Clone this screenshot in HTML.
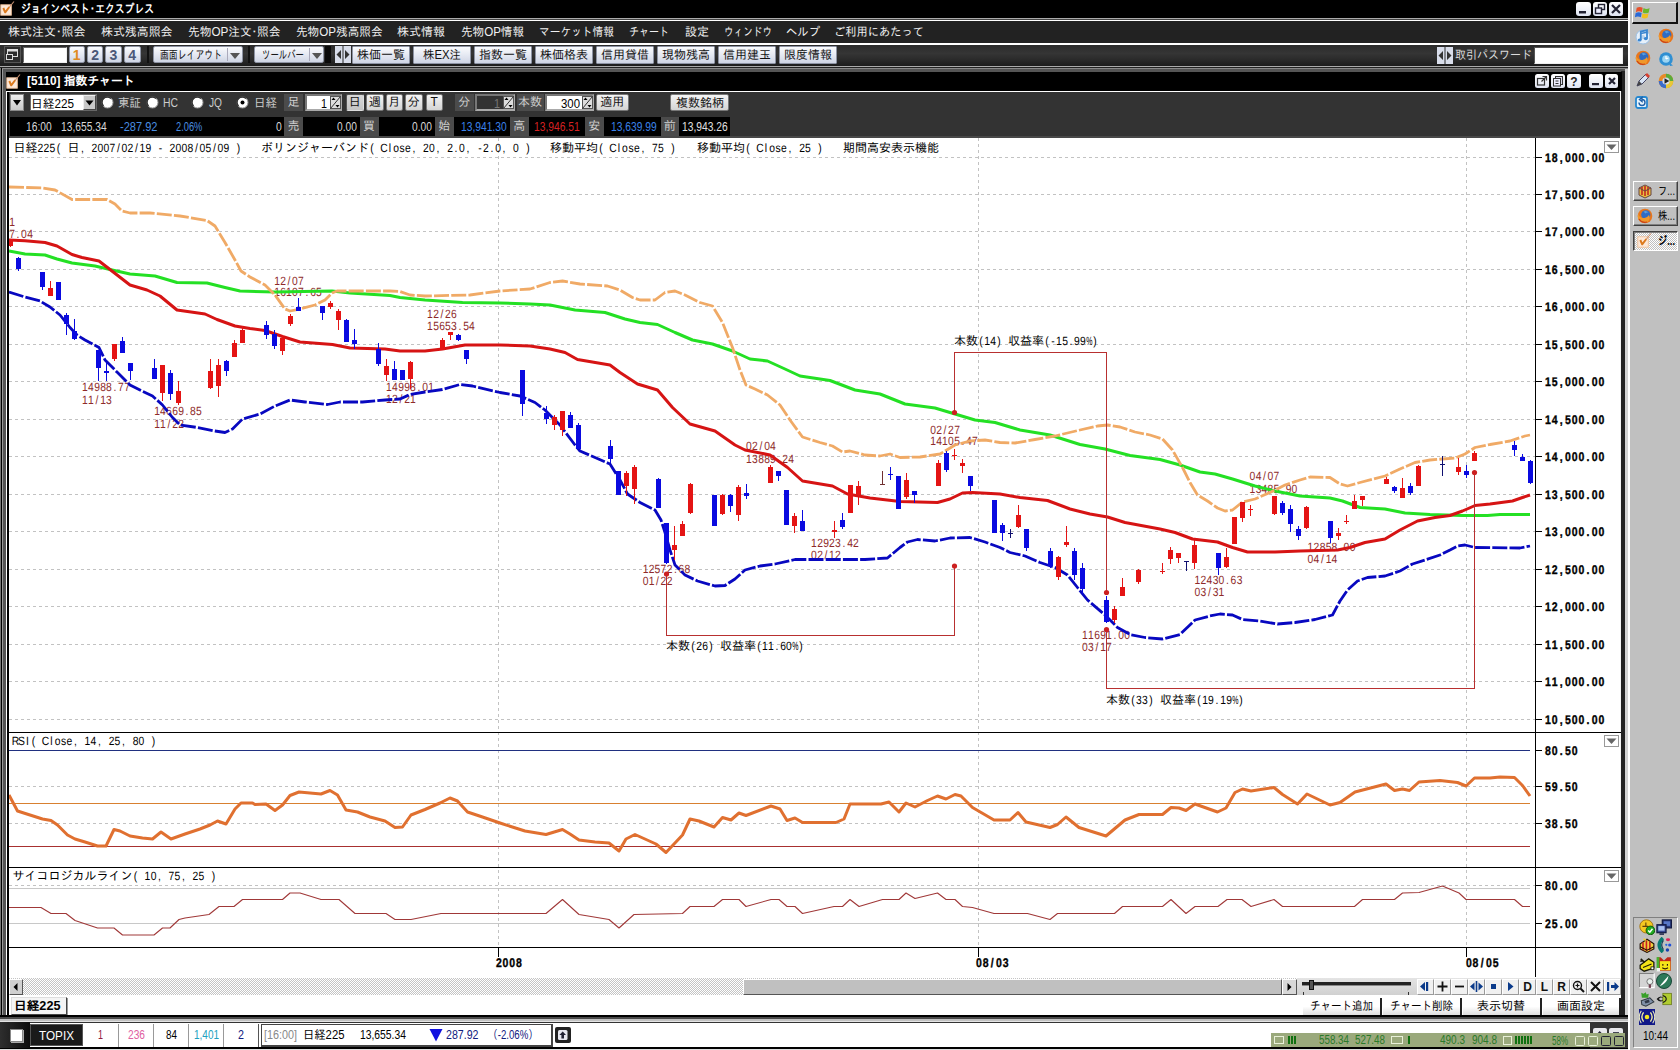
<!DOCTYPE html>
<html lang="ja"><head><meta charset="utf-8"><title>ジョインベスト・エクスプレス</title>
<style>
html,body{margin:0;padding:0}
body{width:1680px;height:1050px;position:relative;overflow:hidden;background:#c0c0c0;font-family:"Liberation Sans","IPAGothic","Noto Sans CJK JP",sans-serif;font-size:12px}
div{position:absolute;box-sizing:border-box;white-space:nowrap}
.t{color:#d8d8d8;font-size:12px}
.btn{background:linear-gradient(#fafbfd,#e3e7f1 55%,#cfd5e4);border:1px solid #8d93a3;border-radius:2px;color:#111;text-align:center;font-size:12px}
.gb{background:linear-gradient(#f4f4f4,#d4d4d4);border:1px solid #777;border-radius:2px;color:#111;text-align:center;font-size:12px}
.lab{background:#4b4b4b;color:#d0d0d0;text-align:center;font-size:12px}
svg text{font-family:"Liberation Sans","IPAGothic",sans-serif;font-size:12px}
.ax{font-weight:bold;font-size:12.5px;fill:#000;stroke:#000;stroke-width:0.35px}
.lb{font-size:12px;fill:#8e2a2a}
.jt{font-size:12px;fill:#000}
.j{font-family:"Liberation Sans","IPAGothic",sans-serif}
.s{position:absolute;overflow:visible}
.sbt{font-family:"Liberation Sans",sans-serif;font-weight:bold;font-size:12px;fill:#111}
.cell{background:#fff;border-right:1px solid #999;text-align:center;font-size:12px;line-height:22px}
.tb{background:#c0c0c0;border:1px solid;border-color:#fff #404040 #404040 #fff;box-shadow:inset -1px -1px 0 #808080;font-size:12px;color:#000}
</style></head><body>
<div style="left:0px;top:0px;width:1628px;height:1050px;background:#000"></div>
<div style="left:0px;top:1px;width:15px;height:15px;"><svg width="15" height="15" viewBox="0 0 15 15"><rect x="0.800" y="3.800" width="10.500" height="10.400" fill="#fce9da" stroke="#f2c39c" stroke-width="0.900"/><path d="M3.300 7 L5.200 11.300 L9.300 6" fill="none" stroke="#dc7a1e" stroke-width="2" stroke-linejoin="round"/><path d="M9 6.500 L14 0.500" fill="none" stroke="#c89070" stroke-width="1.100"/></svg></div>
<svg class="s" style="left:21px;top:1px" width="133" height="16"><text x="0" y="12.32" font-size="12" fill="#fff" font-weight="bold" textLength="133" lengthAdjust="spacingAndGlyphs">ジョインベスト<tspan dx="-2.500">・</tspan><tspan dx="-2.500">エクスプレス</tspan></text></svg>
<div style="left:1576px;top:1.5px;width:14.5px;height:14.5px;background:linear-gradient(#fff,#dfe4f2);border-radius:3px;overflow:hidden"><svg width="14" height="14"><rect x="3" y="9" width="7" height="2.500" fill="#223"/></svg></div>
<div style="left:1592.5px;top:1.5px;width:14.5px;height:14.5px;background:linear-gradient(#fff,#dfe4f2);border-radius:3px;overflow:hidden"><svg width="14" height="14"><rect x="5.500" y="2.500" width="6" height="5" fill="none" stroke="#223" stroke-width="1.400"/><rect x="2.500" y="6" width="6" height="5.500" fill="#eef" stroke="#223" stroke-width="1.400"/></svg></div>
<div style="left:1608.5px;top:1.5px;width:14.5px;height:14.5px;background:linear-gradient(#fff,#dfe4f2);border-radius:3px;overflow:hidden"><svg width="14" height="14"><path d="M3 3 L11 11 M11 3 L3 11" stroke="#223" stroke-width="2.200"/></svg></div>
<div style="left:0px;top:18px;width:1628px;height:1px;background:#aaa"></div>
<div style="left:0px;top:19px;width:1628px;height:0.5px;background:#444"></div>
<div style="left:0px;top:19.5px;width:1628px;height:1.5px;background:#fff"></div>
<div style="left:0px;top:21px;width:1628px;height:22.2px;background:#222"></div>
<svg class="s" style="left:7.5px;top:24px" width="77.5" height="16"><text x="0" y="12.32" font-size="12" fill="#f0f0f0" textLength="77.5" lengthAdjust="spacingAndGlyphs">株式注文<tspan dx="-3.200">・</tspan><tspan dx="-3.200">照会</tspan></text></svg>
<svg class="s" style="left:100.5px;top:24px" width="71.5" height="16"><text x="0" y="12.32" font-size="12" fill="#f0f0f0" textLength="71.5" lengthAdjust="spacingAndGlyphs">株式残高照会</text></svg>
<svg class="s" style="left:187.5px;top:24px" width="92.5" height="16"><text x="0" y="12.32" font-size="12" fill="#f0f0f0" textLength="92.5" lengthAdjust="spacingAndGlyphs">先物OP注文<tspan dx="-3.200">・</tspan><tspan dx="-3.200">照会</tspan></text></svg>
<svg class="s" style="left:295.5px;top:24px" width="86.5" height="16"><text x="0" y="12.32" font-size="12" fill="#f0f0f0" textLength="86.5" lengthAdjust="spacingAndGlyphs">先物OP残高照会</text></svg>
<svg class="s" style="left:397px;top:24px" width="48" height="16"><text x="0" y="12.32" font-size="12" fill="#f0f0f0" textLength="48" lengthAdjust="spacingAndGlyphs">株式情報</text></svg>
<svg class="s" style="left:460.5px;top:24px" width="63" height="16"><text x="0" y="12.32" font-size="12" fill="#f0f0f0" textLength="63" lengthAdjust="spacingAndGlyphs">先物OP情報</text></svg>
<svg class="s" style="left:538.5px;top:24px" width="75" height="16"><text x="0" y="12.32" font-size="12" fill="#f0f0f0" textLength="75" lengthAdjust="spacingAndGlyphs">マーケット情報</text></svg>
<svg class="s" style="left:628.5px;top:24px" width="40" height="16"><text x="0" y="12.32" font-size="12" fill="#f0f0f0" textLength="40" lengthAdjust="spacingAndGlyphs">チャート</text></svg>
<svg class="s" style="left:685px;top:24px" width="24" height="16"><text x="0" y="12.32" font-size="12" fill="#f0f0f0" textLength="24" lengthAdjust="spacingAndGlyphs">設定</text></svg>
<svg class="s" style="left:723.5px;top:24px" width="48" height="16"><text x="0" y="12.32" font-size="12" fill="#f0f0f0" textLength="48" lengthAdjust="spacingAndGlyphs">ウィンドウ</text></svg>
<svg class="s" style="left:786px;top:24px" width="34" height="16"><text x="0" y="12.32" font-size="12" fill="#f0f0f0" textLength="34" lengthAdjust="spacingAndGlyphs">ヘルプ</text></svg>
<svg class="s" style="left:834px;top:24px" width="90" height="16"><text x="0" y="12.32" font-size="12" fill="#f0f0f0" textLength="90" lengthAdjust="spacingAndGlyphs">ご利用にあたって</text></svg>
<div style="left:0px;top:43.2px;width:1628px;height:1.7px;background:#fff"></div>
<div style="left:0px;top:44.9px;width:1628px;height:21px;background:linear-gradient(#2a2a2a,#353535 40%,#2a2a2a 70%,#1c1c1c)"></div>
<div style="left:0px;top:65.8px;width:1628px;height:1.3px;background:#aaa"></div>
<div style="left:0px;top:67.1px;width:1628px;height:1.3px;background:#222"></div>
<div style="left:4px;top:46px;width:16.5px;height:16.5px;background:#2c2c2c;border:1px solid #555"><svg width="15" height="15"><rect x="2.500" y="2.500" width="10" height="7" fill="none" stroke="#ddd"/><rect x="2.500" y="2.500" width="10" height="2" fill="#ddd"/><rect x="1.500" y="7.500" width="6" height="5" fill="#2c2c2c" stroke="#ddd"/></svg></div>
<div style="left:22.5px;top:46.5px;width:44px;height:16.5px;background:#fff;border:1px solid #999;border-color:#666 #eee #eee #666"></div>
<div class="btn" style="left:68.5px;top:46px;width:16.5px;height:17px;color:#e08a20;font-weight:bold;font-size:14px;line-height:16px;font-family:"Liberation Sans",sans-serif;border-color:#aab">1</div>
<div class="btn" style="left:86.8px;top:46px;width:16.5px;height:17px;color:#4a5878;font-weight:bold;font-size:14px;line-height:16px;font-family:"Liberation Sans",sans-serif;border-color:#aab">2</div>
<div class="btn" style="left:105.2px;top:46px;width:16.5px;height:17px;color:#4a5878;font-weight:bold;font-size:14px;line-height:16px;font-family:"Liberation Sans",sans-serif;border-color:#aab">3</div>
<div class="btn" style="left:124px;top:46px;width:16.5px;height:17px;color:#4a5878;font-weight:bold;font-size:14px;line-height:16px;font-family:"Liberation Sans",sans-serif;border-color:#aab">4</div>
<div style="left:147px;top:46px;width:2px;height:17px;background:#111"></div>
<div class="btn" style="left:153px;top:46px;width:90px;height:17px;"><svg class="s" style="left:6px;top:-0.5px" width="62" height="16"><text x="0" y="12.32" font-size="12" fill="#111" textLength="62" lengthAdjust="spacingAndGlyphs">画面レイアウト</text></svg><div style="left:72.500px;top:1px;width:1px;height:13px;background:#aab"></div><svg class="s" style="left:76px;top:5.500px" width="10" height="6"><path d="M0 0h10l-5 6z" fill="#555"/></svg></div>
<div style="left:248px;top:46px;width:2px;height:17px;background:#111"></div>
<div class="btn" style="left:254px;top:46px;width:70px;height:17px;"><svg class="s" style="left:6.5px;top:-0.5px" width="42" height="16"><text x="0" y="12.32" font-size="12" fill="#111" textLength="42" lengthAdjust="spacingAndGlyphs">ツールバー</text></svg><div style="left:53.500px;top:1px;width:1px;height:13px;background:#aab"></div><svg class="s" style="left:56.5px;top:5.500px" width="10" height="6"><path d="M0 0h10l-5 6z" fill="#555"/></svg></div>
<div style="left:324.5px;top:46px;width:6.5px;height:17px;background:#0a0a0a"></div>
<div style="left:335px;top:46px;width:16px;height:17px;"><svg width="16" height="17"><rect x="0" y="0" width="7.500" height="17" fill="#d8ddea"/><rect x="8.500" y="0" width="7.500" height="17" fill="#d8ddea"/><path d="M6 4 L1.500 8.500 L6 13z M10 4 L14.500 8.500 L10 13z" fill="#333"/></svg></div>
<div class="btn" style="left:351.8px;top:45.5px;width:58.2px;height:18px;border-radius:1px"><svg class="s" style="left:4.1px;top:0px" width="48" height="16"><text x="0" y="12.32" font-size="12" fill="#111" textLength="48" lengthAdjust="spacingAndGlyphs">株価一覧</text></svg></div>
<div class="btn" style="left:412.83px;top:45.5px;width:58.2px;height:18px;border-radius:1px"><svg class="s" style="left:9.1px;top:0px" width="38" height="16"><text x="0" y="12.32" font-size="12" fill="#111" textLength="38" lengthAdjust="spacingAndGlyphs">株EX注</text></svg></div>
<div class="btn" style="left:473.86px;top:45.5px;width:58.2px;height:18px;border-radius:1px"><svg class="s" style="left:4.1px;top:0px" width="48" height="16"><text x="0" y="12.32" font-size="12" fill="#111" textLength="48" lengthAdjust="spacingAndGlyphs">指数一覧</text></svg></div>
<div class="btn" style="left:534.89px;top:45.5px;width:58.2px;height:18px;border-radius:1px"><svg class="s" style="left:4.1px;top:0px" width="48" height="16"><text x="0" y="12.32" font-size="12" fill="#111" textLength="48" lengthAdjust="spacingAndGlyphs">株価格表</text></svg></div>
<div class="btn" style="left:595.92px;top:45.5px;width:58.2px;height:18px;border-radius:1px"><svg class="s" style="left:4.1px;top:0px" width="48" height="16"><text x="0" y="12.32" font-size="12" fill="#111" textLength="48" lengthAdjust="spacingAndGlyphs">信用貸借</text></svg></div>
<div class="btn" style="left:656.95px;top:45.5px;width:58.2px;height:18px;border-radius:1px"><svg class="s" style="left:4.1px;top:0px" width="48" height="16"><text x="0" y="12.32" font-size="12" fill="#111" textLength="48" lengthAdjust="spacingAndGlyphs">現物残高</text></svg></div>
<div class="btn" style="left:717.98px;top:45.5px;width:58.2px;height:18px;border-radius:1px"><svg class="s" style="left:4.1px;top:0px" width="48" height="16"><text x="0" y="12.32" font-size="12" fill="#111" textLength="48" lengthAdjust="spacingAndGlyphs">信用建玉</text></svg></div>
<div class="btn" style="left:779.01px;top:45.5px;width:58.2px;height:18px;border-radius:1px"><svg class="s" style="left:4.1px;top:0px" width="48" height="16"><text x="0" y="12.32" font-size="12" fill="#111" textLength="48" lengthAdjust="spacingAndGlyphs">限度情報</text></svg></div>
<div style="left:1437px;top:46.5px;width:16px;height:17px;"><svg width="16" height="17"><rect x="0" y="0" width="7.500" height="17" fill="#d8ddea"/><rect x="8.500" y="0" width="7.500" height="17" fill="#d8ddea"/><path d="M6 4 L1.500 8.500 L6 13z M10 4 L14.500 8.500 L10 13z" fill="#333"/></svg></div>
<svg class="s" style="left:1455px;top:47px" width="77" height="16"><text x="0" y="12.32" font-size="12" fill="#dcdcdc" textLength="77" lengthAdjust="spacingAndGlyphs">取引パスワード</text></svg>
<div style="left:1534px;top:46.5px;width:89px;height:17px;background:#fff;border:1px solid #888;border-color:#555 #eee #eee #555"></div>
<div style="left:0px;top:68.4px;width:1628px;height:954px;background:#555"></div>
<div style="left:0px;top:68.4px;width:1px;height:951px;background:#777"></div>
<div style="left:1px;top:68.4px;width:1px;height:951px;background:#000"></div>
<div style="left:2px;top:68.4px;width:1px;height:951px;background:#999"></div>
<div style="left:2px;top:68.4px;width:1626px;height:1.1px;background:#888"></div>
<div style="left:6px;top:90.5px;width:1px;height:926px;background:#fff"></div>
<div style="left:7px;top:90.5px;width:2px;height:926px;background:#000"></div>
<div style="left:1621px;top:71px;width:4px;height:946px;background:#222"></div>
<div style="left:1625px;top:68.5px;width:3px;height:953px;background:#d2d2d2"></div>
<div style="left:1620px;top:91px;width:1px;height:925px;background:#f4f4f4"></div>
<div style="left:6px;top:72px;width:1615.5px;height:18.5px;background:#000"></div>
<div style="left:6px;top:73.5px;width:15px;height:15px;"><svg width="15" height="15" viewBox="0 0 15 15"><rect x="0.800" y="3.800" width="10.500" height="10.400" fill="#fce9da" stroke="#f2c39c" stroke-width="0.900"/><path d="M3.300 7 L5.200 11.300 L9.300 6" fill="none" stroke="#dc7a1e" stroke-width="2" stroke-linejoin="round"/><path d="M9 6.500 L14 0.500" fill="none" stroke="#c89070" stroke-width="1.100"/></svg></div>
<svg class="s" style="left:27px;top:72.7px" width="107.5" height="16"><text x="0" y="12.32" font-size="12" fill="#fff" font-weight="bold" textLength="107.5" lengthAdjust="spacingAndGlyphs">[5110] 指数チャート</text></svg>
<div style="left:1535px;top:74px;width:13.5px;height:13.5px;background:linear-gradient(#fff,#dfe4f2);border-radius:2.500px;overflow:hidden"><svg width="14" height="14"><rect x="2.500" y="4.500" width="7" height="6.500" fill="none" stroke="#333" stroke-width="1.200"/><path d="M6.500 7.500 L11 3 M7.500 2.500h4v4" stroke="#333" stroke-width="1.200" fill="none"/></svg></div>
<div style="left:1551px;top:74px;width:13.5px;height:13.5px;background:linear-gradient(#fff,#dfe4f2);border-radius:2.500px;overflow:hidden"><svg width="14" height="14"><rect x="4.500" y="2.500" width="7" height="8" fill="#dde" stroke="#333"/><rect x="2.500" y="4.500" width="7" height="7.500" fill="#eef" stroke="#333"/><path d="M4.500 7h3M4.500 9.500h3" stroke="#333"/></svg></div>
<div style="left:1567px;top:74px;width:13.5px;height:13.5px;background:linear-gradient(#fff,#dfe4f2);border-radius:2.500px;overflow:hidden"><svg width="14" height="14"><text x="7" y="11.500" text-anchor="middle" style="font-family:'Liberation Sans',sans-serif;font-weight:bold;font-size:12px;fill:#222">?</text></svg></div>
<div style="left:1589px;top:74px;width:13.5px;height:13.5px;background:linear-gradient(#fff,#dfe4f2);border-radius:2.500px;overflow:hidden"><svg width="14" height="14"><rect x="3" y="9" width="7" height="2.200" fill="#223"/></svg></div>
<div style="left:1604.5px;top:74px;width:13.5px;height:13.5px;background:linear-gradient(#fff,#dfe4f2);border-radius:2.500px;overflow:hidden"><svg width="14" height="14"><path d="M4 4 L10 10 M10 4 L4 10" stroke="#223" stroke-width="2.200"/></svg></div>
<div style="left:6px;top:90.5px;width:1615px;height:1.7px;background:#fff"></div>
<div style="left:9px;top:92px;width:1611px;height:45px;background:#333"></div>
<div style="left:10px;top:94.3px;width:13.5px;height:16.5px;background:linear-gradient(#eee,#c8c8c8);border:1px solid #888"><svg width="12" height="15"><path d="M2 5h8l-4 5.500z" fill="#000"/></svg></div>
<div style="left:30px;top:94.3px;width:66.5px;height:16.5px;background:#fff;border:1px solid #666"></div>
<svg class="s" style="left:31px;top:94.6px" width="43" height="16"><text x="0" y="12.68" font-size="13" fill="#000" textLength="43" lengthAdjust="spacingAndGlyphs">日経225</text></svg>
<div style="left:83px;top:95.3px;width:13px;height:14.5px;background:#c8c8c8;border:1px solid #555;border-color:#eee #444 #444 #eee"><svg width="11" height="13"><path d="M1.500 4.500h8l-4 5z" fill="#000"/></svg></div>
<div style="left:100.5px;top:95.8px;width:13px;height:13px;"><svg width="13" height="13"><circle cx="6.500" cy="6.500" r="5.500" fill="#fff" stroke="#999" stroke-width="1"/><path d="M2.500 10 A5.300 5.300 0 0 1 10 2.500" fill="none" stroke="#333" stroke-width="1.500"/></svg></div>
<div style="left:145.5px;top:95.8px;width:13px;height:13px;"><svg width="13" height="13"><circle cx="6.500" cy="6.500" r="5.500" fill="#fff" stroke="#999" stroke-width="1"/><path d="M2.500 10 A5.300 5.300 0 0 1 10 2.500" fill="none" stroke="#333" stroke-width="1.500"/></svg></div>
<div style="left:190.5px;top:95.8px;width:13px;height:13px;"><svg width="13" height="13"><circle cx="6.500" cy="6.500" r="5.500" fill="#fff" stroke="#999" stroke-width="1"/><path d="M2.500 10 A5.300 5.300 0 0 1 10 2.500" fill="none" stroke="#333" stroke-width="1.500"/></svg></div>
<div style="left:236px;top:95.8px;width:13px;height:13px;"><svg width="13" height="13"><circle cx="6.500" cy="6.500" r="5.500" fill="#fff" stroke="#999" stroke-width="1"/><path d="M2.500 10 A5.300 5.300 0 0 1 10 2.500" fill="none" stroke="#333" stroke-width="1.500"/><circle cx="6.500" cy="6.500" r="2" fill="#000"/></svg></div>
<svg class="s" style="left:118px;top:94.8px" width="23" height="16"><text x="0" y="12.32" font-size="12" fill="#ccc" textLength="23" lengthAdjust="spacingAndGlyphs">東証</text></svg>
<svg class="s" style="left:163px;top:94.8px" width="15" height="16"><text x="0" y="12.32" font-size="12" fill="#ccc" textLength="15" lengthAdjust="spacingAndGlyphs">HC</text></svg>
<svg class="s" style="left:209px;top:94.8px" width="13" height="16"><text x="0" y="12.32" font-size="12" fill="#ccc" textLength="13" lengthAdjust="spacingAndGlyphs">JQ</text></svg>
<svg class="s" style="left:253.5px;top:94.8px" width="23" height="16"><text x="0" y="12.32" font-size="12" fill="#ccc" textLength="23" lengthAdjust="spacingAndGlyphs">日経</text></svg>
<div class="lab" style="left:284px;top:94.3px;width:19px;height:16.5px;line-height:16.500px">足</div>
<div style="left:305px;top:93.8px;width:37px;height:17.5px;background:#fff;border:2px solid #888;border-color:#777 #aaa #aaa #777"></div>
<svg class="s" style="left:321px;top:94.6px" width="6" height="16"><text x="0" y="12.68" font-size="13" fill="#000" textLength="6" lengthAdjust="spacingAndGlyphs">1</text></svg>
<div style="left:329.5px;top:96.3px;width:11px;height:13px;"><svg width="11" height="13"><rect x="0.500" y="0.500" width="10" height="12" fill="#ddd" stroke="#555"/><path d="M0.500 12.500 L10.500 0.500" stroke="#333"/><path d="M1.500 4 L3.500 1.500 L5.500 4z" fill="#000"/><path d="M5.500 9 L7.500 11.500 L9.500 9z" fill="#000"/></svg></div>
<div class="gb" style="left:346px;top:94.3px;width:17.5px;height:16.5px;background:linear-gradient(#d8d8d8,#c4c4c4);border-color:#555 #ddd #ddd #555;line-height:14.500px">日</div>
<div class="gb" style="left:366px;top:94.3px;width:17.5px;height:16.5px;line-height:14.500px">週</div>
<div class="gb" style="left:385.5px;top:94.3px;width:17.5px;height:16.5px;line-height:14.500px">月</div>
<div class="gb" style="left:405px;top:94.3px;width:17.5px;height:16.5px;line-height:14.500px">分</div>
<div class="gb" style="left:425.5px;top:94.3px;width:17.5px;height:16.5px;line-height:14.500px">T</div>
<div class="lab" style="left:455px;top:94.3px;width:18.5px;height:16.5px;line-height:16.500px">分</div>
<div style="left:474.5px;top:93.8px;width:40px;height:17.5px;background:#333;border:2px solid #888;border-color:#777 #aaa #aaa #777"></div>
<svg class="s" style="left:494px;top:94.6px" width="6" height="16"><text x="0" y="12.68" font-size="13" fill="#777" textLength="6" lengthAdjust="spacingAndGlyphs">1</text></svg>
<div style="left:502.5px;top:96.3px;width:11px;height:13px;"><svg width="11" height="13"><rect x="0.500" y="0.500" width="10" height="12" fill="#ddd" stroke="#555"/><path d="M0.500 12.500 L10.500 0.500" stroke="#333"/><path d="M1.500 4 L3.500 1.500 L5.500 4z" fill="#000"/><path d="M5.500 9 L7.500 11.500 L9.500 9z" fill="#000"/></svg></div>
<div class="lab" style="left:516.5px;top:94.3px;width:27px;height:16.5px;line-height:16.500px">本数</div>
<div style="left:544.5px;top:93.8px;width:49.5px;height:17.5px;background:#fff;border:2px solid #888;border-color:#777 #aaa #aaa #777"></div>
<svg class="s" style="left:560.5px;top:94.6px" width="19" height="16"><text x="0" y="12.68" font-size="13" fill="#000" textLength="19" lengthAdjust="spacingAndGlyphs">300</text></svg>
<div style="left:581.5px;top:96.3px;width:11px;height:13px;"><svg width="11" height="13"><rect x="0.500" y="0.500" width="10" height="12" fill="#ddd" stroke="#555"/><path d="M0.500 12.500 L10.500 0.500" stroke="#333"/><path d="M1.500 4 L3.500 1.500 L5.500 4z" fill="#000"/><path d="M5.500 9 L7.500 11.500 L9.500 9z" fill="#000"/></svg></div>
<div class="gb" style="left:595.5px;top:94.3px;width:33.5px;height:16.5px;line-height:14.500px">適用</div>
<div class="gb" style="left:669.5px;top:94.3px;width:59.5px;height:16.5px;"><svg class="s" style="left:5px;top:-0.5px" width="48" height="16"><text x="0" y="12.32" font-size="12" fill="#111" textLength="48" lengthAdjust="spacingAndGlyphs">複数銘柄</text></svg></div>
<div style="left:10px;top:117px;width:720px;height:18.5px;background:#000"></div>
<svg class="s" style="left:25.8px;top:119px" width="25.7" height="16"><text x="0" y="12.32" font-size="12" fill="#d8d8d8" textLength="25.7" lengthAdjust="spacingAndGlyphs">16:00</text></svg>
<svg class="s" style="left:60.9px;top:119px" width="45.6" height="16"><text x="0" y="12.32" font-size="12" fill="#d8d8d8" textLength="45.6" lengthAdjust="spacingAndGlyphs">13,655.34</text></svg>
<svg class="s" style="left:119.5px;top:119px" width="37.5" height="16"><text x="0" y="12.32" font-size="12" fill="#4a8ee0" textLength="37.5" lengthAdjust="spacingAndGlyphs">-287.92</text></svg>
<svg class="s" style="left:176.2px;top:119px" width="26.3" height="16"><text x="0" y="12.32" font-size="12" fill="#4a8ee0" textLength="26.3" lengthAdjust="spacingAndGlyphs">2.06%</text></svg>
<svg class="s" style="left:275.7px;top:119px" width="5.8" height="16"><text x="0" y="12.32" font-size="12" fill="#d8d8d8" textLength="5.8" lengthAdjust="spacingAndGlyphs">0</text></svg>
<div class="lab" style="left:284px;top:117px;width:19px;height:18.5px;line-height:18.500px">売</div>
<svg class="s" style="left:336.6px;top:119px" width="19.9" height="16"><text x="0" y="12.32" font-size="12" fill="#d8d8d8" textLength="19.9" lengthAdjust="spacingAndGlyphs">0.00</text></svg>
<div class="lab" style="left:359.5px;top:117px;width:19px;height:18.5px;line-height:18.500px">買</div>
<svg class="s" style="left:411.6px;top:119px" width="19.9" height="16"><text x="0" y="12.32" font-size="12" fill="#d8d8d8" textLength="19.9" lengthAdjust="spacingAndGlyphs">0.00</text></svg>
<div class="lab" style="left:435px;top:117px;width:18.5px;height:18.5px;line-height:18.500px">始</div>
<svg class="s" style="left:460.9px;top:119px" width="45.6" height="16"><text x="0" y="12.32" font-size="12" fill="#3b82e8" textLength="45.6" lengthAdjust="spacingAndGlyphs">13,941.30</text></svg>
<div class="lab" style="left:510px;top:117px;width:18.5px;height:18.5px;line-height:18.500px">高</div>
<svg class="s" style="left:534.4px;top:119px" width="45.6" height="16"><text x="0" y="12.32" font-size="12" fill="#d62222" textLength="45.6" lengthAdjust="spacingAndGlyphs">13,946.51</text></svg>
<div class="lab" style="left:585px;top:117px;width:18.5px;height:18.5px;line-height:18.500px">安</div>
<svg class="s" style="left:610.9px;top:119px" width="45.6" height="16"><text x="0" y="12.32" font-size="12" fill="#3b82e8" textLength="45.6" lengthAdjust="spacingAndGlyphs">13,639.99</text></svg>
<div class="lab" style="left:660.5px;top:117px;width:18.5px;height:18.5px;line-height:18.500px">前</div>
<svg class="s" style="left:681.9px;top:119px" width="45.6" height="16"><text x="0" y="12.32" font-size="12" fill="#e0e0e0" textLength="45.6" lengthAdjust="spacingAndGlyphs">13,943.26</text></svg>
<svg class="chart" width="1612" height="840" viewBox="9 137 1612 840" style="position:absolute;left:9px;top:137px" shape-rendering="crispEdges" text-rendering="geometricPrecision">
<rect x="9" y="137" width="1611" height="840" fill="#fff"/>
<line x1="9" x2="1535" y1="157.5" y2="157.5" stroke="#c2c2c2" stroke-dasharray="3 3"/>
<line x1="1536" x2="1542" y1="157.5" y2="157.5" stroke="#000"/>
<text class="ax" transform="scale(0.84,1)" text-anchor="middle" x="1842.7 1850.7 1858.6 1866.6 1874.6 1882.6 1890.5 1898.5 1906.5" y="162.1">18,000.00</text>
<line x1="9" x2="1535" y1="194.5" y2="194.5" stroke="#c2c2c2" stroke-dasharray="3 3"/>
<line x1="1536" x2="1542" y1="194.5" y2="194.5" stroke="#000"/>
<text class="ax" transform="scale(0.84,1)" text-anchor="middle" x="1842.7 1850.7 1858.6 1866.6 1874.6 1882.6 1890.5 1898.5 1906.5" y="199.1">17,500.00</text>
<line x1="9" x2="1535" y1="231.5" y2="231.5" stroke="#c2c2c2" stroke-dasharray="3 3"/>
<line x1="1536" x2="1542" y1="231.5" y2="231.5" stroke="#000"/>
<text class="ax" transform="scale(0.84,1)" text-anchor="middle" x="1842.7 1850.7 1858.6 1866.6 1874.6 1882.6 1890.5 1898.5 1906.5" y="236.1">17,000.00</text>
<line x1="9" x2="1535" y1="269.5" y2="269.5" stroke="#c2c2c2" stroke-dasharray="3 3"/>
<line x1="1536" x2="1542" y1="269.5" y2="269.5" stroke="#000"/>
<text class="ax" transform="scale(0.84,1)" text-anchor="middle" x="1842.7 1850.7 1858.6 1866.6 1874.6 1882.6 1890.5 1898.5 1906.5" y="274.1">16,500.00</text>
<line x1="9" x2="1535" y1="306.5" y2="306.5" stroke="#c2c2c2" stroke-dasharray="3 3"/>
<line x1="1536" x2="1542" y1="306.5" y2="306.5" stroke="#000"/>
<text class="ax" transform="scale(0.84,1)" text-anchor="middle" x="1842.7 1850.7 1858.6 1866.6 1874.6 1882.6 1890.5 1898.5 1906.5" y="311.1">16,000.00</text>
<line x1="9" x2="1535" y1="344.5" y2="344.5" stroke="#c2c2c2" stroke-dasharray="3 3"/>
<line x1="1536" x2="1542" y1="344.5" y2="344.5" stroke="#000"/>
<text class="ax" transform="scale(0.84,1)" text-anchor="middle" x="1842.7 1850.7 1858.6 1866.6 1874.6 1882.6 1890.5 1898.5 1906.5" y="349.1">15,500.00</text>
<line x1="9" x2="1535" y1="381.5" y2="381.5" stroke="#c2c2c2" stroke-dasharray="3 3"/>
<line x1="1536" x2="1542" y1="381.5" y2="381.5" stroke="#000"/>
<text class="ax" transform="scale(0.84,1)" text-anchor="middle" x="1842.7 1850.7 1858.6 1866.6 1874.6 1882.6 1890.5 1898.5 1906.5" y="386.1">15,000.00</text>
<line x1="9" x2="1535" y1="419.5" y2="419.5" stroke="#c2c2c2" stroke-dasharray="3 3"/>
<line x1="1536" x2="1542" y1="419.5" y2="419.5" stroke="#000"/>
<text class="ax" transform="scale(0.84,1)" text-anchor="middle" x="1842.7 1850.7 1858.6 1866.6 1874.6 1882.6 1890.5 1898.5 1906.5" y="424.1">14,500.00</text>
<line x1="9" x2="1535" y1="456.5" y2="456.5" stroke="#c2c2c2" stroke-dasharray="3 3"/>
<line x1="1536" x2="1542" y1="456.5" y2="456.5" stroke="#000"/>
<text class="ax" transform="scale(0.84,1)" text-anchor="middle" x="1842.7 1850.7 1858.6 1866.6 1874.6 1882.6 1890.5 1898.5 1906.5" y="461.1">14,000.00</text>
<line x1="9" x2="1535" y1="494.5" y2="494.5" stroke="#c2c2c2" stroke-dasharray="3 3"/>
<line x1="1536" x2="1542" y1="494.5" y2="494.5" stroke="#000"/>
<text class="ax" transform="scale(0.84,1)" text-anchor="middle" x="1842.7 1850.7 1858.6 1866.6 1874.6 1882.6 1890.5 1898.5 1906.5" y="499.1">13,500.00</text>
<line x1="9" x2="1535" y1="531.5" y2="531.5" stroke="#c2c2c2" stroke-dasharray="3 3"/>
<line x1="1536" x2="1542" y1="531.5" y2="531.5" stroke="#000"/>
<text class="ax" transform="scale(0.84,1)" text-anchor="middle" x="1842.7 1850.7 1858.6 1866.6 1874.6 1882.6 1890.5 1898.5 1906.5" y="536.1">13,000.00</text>
<line x1="9" x2="1535" y1="569.5" y2="569.5" stroke="#c2c2c2" stroke-dasharray="3 3"/>
<line x1="1536" x2="1542" y1="569.5" y2="569.5" stroke="#000"/>
<text class="ax" transform="scale(0.84,1)" text-anchor="middle" x="1842.7 1850.7 1858.6 1866.6 1874.6 1882.6 1890.5 1898.5 1906.5" y="574.1">12,500.00</text>
<line x1="9" x2="1535" y1="606.5" y2="606.5" stroke="#c2c2c2" stroke-dasharray="3 3"/>
<line x1="1536" x2="1542" y1="606.5" y2="606.5" stroke="#000"/>
<text class="ax" transform="scale(0.84,1)" text-anchor="middle" x="1842.7 1850.7 1858.6 1866.6 1874.6 1882.6 1890.5 1898.5 1906.5" y="611.1">12,000.00</text>
<line x1="9" x2="1535" y1="644.5" y2="644.5" stroke="#c2c2c2" stroke-dasharray="3 3"/>
<line x1="1536" x2="1542" y1="644.5" y2="644.5" stroke="#000"/>
<text class="ax" transform="scale(0.84,1)" text-anchor="middle" x="1842.7 1850.7 1858.6 1866.6 1874.6 1882.6 1890.5 1898.5 1906.5" y="649.1">11,500.00</text>
<line x1="9" x2="1535" y1="681.5" y2="681.5" stroke="#c2c2c2" stroke-dasharray="3 3"/>
<line x1="1536" x2="1542" y1="681.5" y2="681.5" stroke="#000"/>
<text class="ax" transform="scale(0.84,1)" text-anchor="middle" x="1842.7 1850.7 1858.6 1866.6 1874.6 1882.6 1890.5 1898.5 1906.5" y="686.1">11,000.00</text>
<line x1="9" x2="1535" y1="719.5" y2="719.5" stroke="#c2c2c2" stroke-dasharray="3 3"/>
<line x1="1536" x2="1542" y1="719.5" y2="719.5" stroke="#000"/>
<text class="ax" transform="scale(0.84,1)" text-anchor="middle" x="1842.7 1850.7 1858.6 1866.6 1874.6 1882.6 1890.5 1898.5 1906.5" y="724.1">10,500.00</text>
<line x1="1536" x2="1542" y1="750.5" y2="750.5" stroke="#000"/>
<text class="ax" transform="scale(0.84,1)" text-anchor="middle" x="1842.7 1850.7 1858.6 1866.6 1874.6" y="755.1">80.50</text>
<line x1="9" x2="1535" y1="786.5" y2="786.5" stroke="#c2c2c2" stroke-dasharray="3 3"/>
<line x1="1536" x2="1542" y1="786.5" y2="786.5" stroke="#000"/>
<text class="ax" transform="scale(0.84,1)" text-anchor="middle" x="1842.7 1850.7 1858.6 1866.6 1874.6" y="791.1">59.50</text>
<line x1="9" x2="1535" y1="823.5" y2="823.5" stroke="#c2c2c2" stroke-dasharray="3 3"/>
<line x1="1536" x2="1542" y1="823.5" y2="823.5" stroke="#000"/>
<text class="ax" transform="scale(0.84,1)" text-anchor="middle" x="1842.7 1850.7 1858.6 1866.6 1874.6" y="828.1">38.50</text>
<line x1="1536" x2="1542" y1="885.5" y2="885.5" stroke="#000"/>
<text class="ax" transform="scale(0.84,1)" text-anchor="middle" x="1842.7 1850.7 1858.6 1866.6 1874.6" y="890.1">80.00</text>
<line x1="1536" x2="1542" y1="923.5" y2="923.5" stroke="#000"/>
<text class="ax" transform="scale(0.84,1)" text-anchor="middle" x="1842.7 1850.7 1858.6 1866.6 1874.6" y="928.1">25.00</text>
<line x1="9" x2="1535" y1="885.5" y2="885.5" stroke="#c2c2c2" stroke-dasharray="3 3"/>
<line x1="9" x2="1530" y1="888.5" y2="888.5" stroke="#c8c8c8"/>
<line x1="9" x2="1530" y1="923.5" y2="923.5" stroke="#c8c8c8"/>
<line x1="498.5" x2="498.5" y1="138" y2="947" stroke="#c2c2c2" stroke-dasharray="3 3"/>
<line x1="498.5" x2="498.5" y1="947" y2="957" stroke="#000"/>
<line x1="978.5" x2="978.5" y1="138" y2="947" stroke="#c2c2c2" stroke-dasharray="3 3"/>
<line x1="978.5" x2="978.5" y1="947" y2="957" stroke="#000"/>
<line x1="1466.5" x2="1466.5" y1="138" y2="947" stroke="#c2c2c2" stroke-dasharray="3 3"/>
<line x1="1466.5" x2="1466.5" y1="947" y2="957" stroke="#000"/>
<line x1="9" x2="1530" y1="750.5" y2="750.5" stroke="#203080"/>
<line x1="9" x2="1530" y1="803.5" y2="803.5" stroke="#d88030"/>
<line x1="9" x2="1530" y1="846.5" y2="846.5" stroke="#a83030"/>
<text class="lb" transform="scale(0.86,1)" text-anchor="middle" x="14.0" y="225.5">1</text>
<text class="lb" transform="scale(0.86,1)" text-anchor="middle" x="14.0 20.9 27.9 34.9" y="237.5">7.04</text>
<text class="lb" transform="scale(0.86,1)" text-anchor="middle" x="322.1 329.1 336.0 343.0 350.0" y="284.5">12/07</text>
<text class="lb" transform="scale(0.86,1)" text-anchor="middle" x="322.1 329.1 336.0 343.0 350.0 357.0 364.0 370.9" y="296">16107.65</text>
<text class="lb" transform="scale(0.86,1)" text-anchor="middle" x="98.8 105.8 112.8 119.8 126.7 133.7 140.7 147.7" y="391">14988.77</text>
<text class="lb" transform="scale(0.86,1)" text-anchor="middle" x="98.8 105.8 112.8 119.8 126.7" y="403.5">11/13</text>
<text class="lb" transform="scale(0.86,1)" text-anchor="middle" x="182.6 189.5 196.5 203.5 210.5 217.4 224.4 231.4" y="415">14669.85</text>
<text class="lb" transform="scale(0.86,1)" text-anchor="middle" x="182.6 189.5 196.5 203.5 210.5" y="427.5">11/22</text>
<text class="lb" transform="scale(0.86,1)" text-anchor="middle" x="500.0 507.0 514.0 520.9 527.9" y="318">12/26</text>
<text class="lb" transform="scale(0.86,1)" text-anchor="middle" x="500.0 507.0 514.0 520.9 527.9 534.9 541.9 548.8" y="330">15653.54</text>
<text class="lb" transform="scale(0.86,1)" text-anchor="middle" x="452.3 459.3 466.3 473.3 480.2 487.2 494.2 501.2" y="391">14998.01</text>
<text class="lb" transform="scale(0.86,1)" text-anchor="middle" x="452.3 459.3 466.3 473.3 480.2" y="403">12/21</text>
<text class="lb" transform="scale(0.86,1)" text-anchor="middle" x="750.6 757.6 764.5 771.5 778.5 785.5 792.4 799.4" y="572.5">12572.68</text>
<text class="lb" transform="scale(0.86,1)" text-anchor="middle" x="750.6 757.6 764.5 771.5 778.5" y="584.5">01/22</text>
<text class="lb" transform="scale(0.86,1)" text-anchor="middle" x="870.9 877.9 884.9 891.9 898.8" y="450">02/04</text>
<text class="lb" transform="scale(0.86,1)" text-anchor="middle" x="870.9 877.9 884.9 891.9 898.8 905.8 912.8 919.8" y="463">13889.24</text>
<text class="lb" transform="scale(0.86,1)" text-anchor="middle" x="946.5 953.5 960.5 967.4 974.4 981.4 988.4 995.3" y="547">12923.42</text>
<text class="lb" transform="scale(0.86,1)" text-anchor="middle" x="946.5 953.5 960.5 967.4 974.4" y="558.5">02/12</text>
<text class="lb" transform="scale(0.86,1)" text-anchor="middle" x="1084.9 1091.9 1098.8 1105.8 1112.8" y="433.5">02/27</text>
<text class="lb" transform="scale(0.86,1)" text-anchor="middle" x="1084.9 1091.9 1098.8 1105.8 1112.8 1119.8 1126.7 1133.7" y="445">14105.47</text>
<text class="lb" transform="scale(0.86,1)" text-anchor="middle" x="1261.6 1268.6 1275.6 1282.6 1289.5 1296.5 1303.5 1310.5" y="638.5">11691.00</text>
<text class="lb" transform="scale(0.86,1)" text-anchor="middle" x="1261.6 1268.6 1275.6 1282.6 1289.5" y="651">03/17</text>
<text class="lb" transform="scale(0.86,1)" text-anchor="middle" x="1392.4 1399.4 1406.4 1413.4 1420.3 1427.3 1434.3 1441.3" y="583.5">12430.63</text>
<text class="lb" transform="scale(0.86,1)" text-anchor="middle" x="1392.4 1399.4 1406.4 1413.4 1420.3" y="596">03/31</text>
<text class="lb" transform="scale(0.86,1)" text-anchor="middle" x="1456.4 1463.4 1470.3 1477.3 1484.3" y="480">04/07</text>
<text class="lb" transform="scale(0.86,1)" text-anchor="middle" x="1456.4 1463.4 1470.3 1477.3 1484.3 1491.3 1498.3 1505.2" y="493">13485.90</text>
<text class="lb" transform="scale(0.86,1)" text-anchor="middle" x="1523.8 1530.8 1537.8 1544.8 1551.7 1558.7 1565.7 1572.7" y="550.5">12858.00</text>
<text class="lb" transform="scale(0.86,1)" text-anchor="middle" x="1523.8 1530.8 1537.8 1544.8 1551.7" y="563">04/14</text>
<g shape-rendering="auto" fill="none" stroke-linejoin="round" stroke-linecap="butt">
<polyline points="9,251 25,254 45,255 57,259 72,263 95,266 110,269.5 130,274 155,276 177,282.5 207,283 225,287.5 240,291 275,292 332,291 350,293 390,295.5 400,297.5 425,300 462.5,302.5 500,303 530,304 550,305 575,310 605,312.5 625,319 640,322.5 657.5,324.5 675,332.5 692.5,340 712.5,344 732.5,351 750,359 767.5,361 785,369 800,376 830,380.5 855,390 880,394 905,404 935,408 955,414 975,420 995,422.5 1020,430 1050,435 1080,444.5 1105,449 1130,455.5 1160,459.5 1180,465 1200,472 1215,474 1232.5,479 1255,486 1275,491 1300,496 1330,498 1342.5,501 1360,507.5 1385,509 1405,513 1430,514.5 1462.5,515.5 1487.5,515.5 1500,514.5 1530,514.5" stroke="#24e024" stroke-width="3"/>
<polyline points="9,187 42,188 55,190 72,199.5 107,199.5 115,204 122,211 130,213 150,213 180,216 207,220.5 215,226 225,242.5 235,260 241,271 250,277 265,285 275,295 285,309 290,311 300,309 315,305 325,300 332,293 337,291 390,291 400,291.5 410,295 425,296 470,295 500,291 530,289 550,282.5 562.5,281 580,284 607.5,286 620,290 632.5,297.5 640,300 655,300 665,292.5 675,291 685,295 700,302.5 712.5,306 722.5,322.5 732.5,347.5 740,370 746,385 755,389 767.5,395 780,405 790,420 802.5,437 820,442.5 832.5,446 842.5,452 850,451 865,455 880,456 890,454 900,457.5 920,457 940,454 955,445 970,441 985,440 1000,442.5 1015,443 1035,439.5 1055,436 1080,430 1097.5,426 1107.5,425 1120,427 1135,432 1150,435 1162.5,439 1172.5,450 1182.5,467.5 1190,482.5 1197.5,495 1207.5,501 1217.5,508 1225,511 1232.5,510 1242.5,502 1255,499 1270,492.5 1285,485 1300,480 1310,477 1330,477.5 1340,484 1347.5,486 1360,482.5 1385,476 1400,469 1415,462.5 1430,460 1455,458 1465,454 1475,447.5 1490,444.5 1510,441 1525,436 1530,435" stroke="#f0aa66" stroke-width="2.800" stroke-dasharray="15 2.200"/>
<polyline points="9,292 25,297 40,301 50,307 60,315 70,327.5 77,335 85,340 99,347.5 105,360 117.5,372.5 130,385 140,390 152.5,396 162.5,405 172.5,417.5 180,425 197.5,427.5 215,431 225,432.5 232.5,429 242.5,419 260,414 275,406 290,400 305,402 327.5,404.5 340,402 362.5,402 385,400 400,399 410,394.5 425,392 442.5,389.5 460,384.5 472.5,386 500,392.5 520,396 535,402.5 545,410 560,425 575,445 580,451 595,457.5 610,464 620,480 627.5,494 640,502.5 655,510 661,520 665,532.5 670,550 675,565 685,575 697.5,581 715,586 725,585.5 735,579 745,570 760,566 775,564 795,559.5 820,559.5 865,559.5 887.5,558 900,547.5 907.5,542 917.5,539.5 935,541 950,538 970,537.5 985,542 1000,547.5 1010,552.5 1025,556 1040,562.5 1055,567.5 1067.5,575 1077.5,587.5 1087.5,600 1105,615 1117.5,627.5 1130,634.5 1145,637.5 1162.5,639 1180,634.5 1195,620 1210,616 1220,614 1232.5,615 1242.5,619.5 1260,621 1277.5,624 1295,622.5 1315,619.5 1332.5,615 1340,601 1347.5,590 1357.5,581 1367.5,577.5 1385,576 1400,571 1412.5,564 1425,560 1440,555 1450,550 1457.5,546 1465,545 1475,547.5 1520,548 1530,546" stroke="#0808c0" stroke-width="2.800" stroke-dasharray="15 2.200"/>
<polyline points="9,240 25,240.7 45,242.5 57,246 72,254.5 82,257.5 99,261 110,269.5 130,285 147,290 160,296 177,310 205,314 217,319.5 235,326 250,328.5 265,330.5 282.5,336.5 300,342 332.5,344.5 350,348 385,349 400,351 425,351 442.5,349 465,345 500,345 530,346 550,349 565,352.5 577.5,359.5 610,365 620,372.5 637.5,384 657.5,390 672.5,407.5 690,424 715,431 735,445 745,450 770,455 787.5,467.5 802.5,481 832.5,486 847.5,494 870,498 900,501.5 937.5,502.5 950,499 962.5,493 972.5,492.5 1000,494 1020,497.5 1047.5,500.5 1070,509 1090,514 1107.5,517 1125,522.5 1160,529 1175,532.5 1192.5,539 1217.5,542 1232.5,547.5 1247.5,552 1275,552 1300,551 1337.5,550 1350,547.5 1365,542.5 1385,539 1400,530 1417.5,521 1435,517.5 1450,515.5 1462.5,511 1475,505.5 1490,504 1512.5,501 1522.5,497.5 1530,495" stroke="#d61414" stroke-width="3"/>
<polyline points="9,795 17.5,811 30,815 42.5,819 51,820.5 57.5,825 67.5,835 75,839 85,842 97.5,846 106,846 114,829.5 120,831 130,836 142.5,838 152.5,839 161,832 171,839 185,834 200,829 210,825 217.5,821 226,824 235,809 241,803 252.5,803 255,804.5 266,804 275,810.5 282.5,805 290,795.5 299,792 310,793 321,794 330,790.5 337.5,795 346,810 357.5,812 370,817 385,821 395,827.5 402.5,827 411,815 425,809.5 440,803 450,798 457.5,801 467.5,812 482.5,817 500,823 525,831 546,834.5 562.5,829.5 570,834 579,840 595,842 609,843 619,851 626,839 635,834.5 656,844 666,852.5 682.5,835 690,819 699,821 714,827 722.5,817.5 731,820 739,813 746,815.5 771,806 780,809 787,820.5 795,818 802.5,822.5 836,822.5 844,819 850,804 881,804 889,802 899,812 906,803 915,807 927.5,800.5 937.5,796 946,799 955,794.5 961,796 972.5,807.5 994,820 1010,820 1018,812.5 1026,822 1050,827.5 1057.5,824.5 1066,817 1079,827.5 1106,836 1125,820 1139,814.5 1162.5,814.5 1171,807.5 1179,808 1186,810.5 1195,804 1217.5,812 1226,808 1235,792.5 1242.5,789 1251,791 1274,787.5 1282.5,794.5 1297.5,804 1307,794 1330,805 1340,802.5 1355,792 1386,784 1394.5,790.5 1402.5,789 1409.5,790.5 1419,782 1440,780.5 1457.5,782.5 1466,786 1474.5,778 1490,778 1500,777 1514.5,777.5 1522.5,785.5 1530,796" stroke="#e07030" stroke-width="3"/>
<polyline points="9,907.5 41,907.5 51,913.5 66,913.5 75,920.5 97.5,928 114,928 122.5,935 154,935 162.5,928 170,928 179,919.5 185,918 209,914.5 219,906.5 234,906.5 242.5,899.5 282.5,899.5 290,893 300,893 321,899.5 339,899.5 355,913.5 386,913.5 395,919.5 411,919.5 441,913.5 546,913.5 562.5,899.5 579,914.5 609,919.5 619,928 634,914.5 682.5,913.5 690,906.5 714,906.5 722.5,899.5 739,899.5 746,906.5 771,899.5 779,899.5 787,906.5 795,906.5 802.5,913.5 834,906.5 842.5,906.5 850,899.5 859,906.5 882.5,899.5 899,899.5 906,893 915,898.5 937.5,893 946,899.5 955,899.5 962.5,906.5 972.5,907.5 994,913.5 1027.5,913.5 1050,919.5 1057.5,913.5 1114.5,913.5 1122.5,906.5 1162.5,906.5 1171,899.5 1186,913.5 1195,906.5 1218,906.5 1227,899.5 1242,899.5 1251,906.5 1274,899.5 1282.5,906.5 1354.5,906.5 1362.5,899.5 1394.5,899.5 1402.5,893 1419,892.5 1442.5,886 1459,893 1466,899.5 1514.5,899.5 1522.5,906.5 1530,906.5" stroke="#a03838" stroke-width="1.1"/>
</g>
<line x1="10.5" x2="10.5" y1="239" y2="247" stroke="#e41414"/>
<rect x="8" y="239" width="5" height="7" fill="#e41414"/>
<line x1="18.5" x2="18.5" y1="257" y2="270.5" stroke="#0a0ae0"/>
<rect x="16" y="257.5" width="5" height="11.5" fill="#0a0ae0"/>
<line x1="42.5" x2="42.5" y1="272" y2="290" stroke="#0a0ae0"/>
<rect x="40" y="272" width="5" height="15" fill="#0a0ae0"/>
<line x1="50.5" x2="50.5" y1="280.5" y2="296" stroke="#e41414"/>
<rect x="48" y="288" width="5" height="7.5" fill="#e41414"/>
<line x1="58.5" x2="58.5" y1="282" y2="300" stroke="#0a0ae0"/>
<rect x="56" y="282" width="5" height="17.5" fill="#0a0ae0"/>
<line x1="66.5" x2="66.5" y1="312.5" y2="334.5" stroke="#0a0ae0"/>
<rect x="64" y="315" width="5" height="9" fill="#0a0ae0"/>
<line x1="74.5" x2="74.5" y1="319" y2="339.5" stroke="#0a0ae0"/>
<rect x="72" y="331" width="5" height="8" fill="#0a0ae0"/>
<line x1="98.5" x2="98.5" y1="350" y2="381" stroke="#0a0ae0"/>
<rect x="96" y="350" width="5" height="17.5" fill="#0a0ae0"/>
<line x1="106.5" x2="106.5" y1="362.5" y2="381" stroke="#0a0ae0"/>
<rect x="104" y="370.5" width="5" height="2" fill="#0a0ae0"/>
<line x1="114.5" x2="114.5" y1="344" y2="360.5" stroke="#e41414"/>
<rect x="112" y="344" width="5" height="15" fill="#e41414"/>
<line x1="122.5" x2="122.5" y1="337" y2="352.5" stroke="#0a0ae0"/>
<rect x="120" y="341" width="5" height="11.5" fill="#0a0ae0"/>
<line x1="130.5" x2="130.5" y1="363" y2="380" stroke="#0a0ae0"/>
<rect x="128" y="363" width="5" height="8" fill="#0a0ae0"/>
<line x1="154.5" x2="154.5" y1="359" y2="379" stroke="#0a0ae0"/>
<rect x="152" y="368" width="5" height="11" fill="#0a0ae0"/>
<line x1="162.5" x2="162.5" y1="365" y2="401" stroke="#e41414"/>
<rect x="160" y="365" width="5" height="27.5" fill="#e41414"/>
<line x1="170.5" x2="170.5" y1="370" y2="400" stroke="#0a0ae0"/>
<rect x="168" y="372.5" width="5" height="21.5" fill="#0a0ae0"/>
<line x1="178.5" x2="178.5" y1="381" y2="405" stroke="#e41414"/>
<rect x="176" y="390.5" width="5" height="12" fill="#e41414"/>
<line x1="210.5" x2="210.5" y1="359" y2="389" stroke="#e41414"/>
<rect x="208" y="371" width="5" height="16.5" fill="#e41414"/>
<line x1="218.5" x2="218.5" y1="359" y2="397" stroke="#e41414"/>
<rect x="216" y="365" width="5" height="20.5" fill="#e41414"/>
<line x1="226.5" x2="226.5" y1="360" y2="376" stroke="#0a0ae0"/>
<rect x="224" y="361" width="5" height="10" fill="#0a0ae0"/>
<line x1="234.5" x2="234.5" y1="340" y2="357" stroke="#e41414"/>
<rect x="232" y="343" width="5" height="14" fill="#e41414"/>
<line x1="242.5" x2="242.5" y1="326" y2="343" stroke="#e41414"/>
<rect x="240" y="329.5" width="5" height="13.5" fill="#e41414"/>
<line x1="266.5" x2="266.5" y1="321" y2="339" stroke="#0a0ae0"/>
<rect x="264" y="325" width="5" height="9.5" fill="#0a0ae0"/>
<line x1="274.5" x2="274.5" y1="330" y2="349" stroke="#0a0ae0"/>
<rect x="272" y="334" width="5" height="12" fill="#0a0ae0"/>
<line x1="282.5" x2="282.5" y1="335" y2="355" stroke="#e41414"/>
<rect x="280" y="337.5" width="5" height="13.5" fill="#e41414"/>
<line x1="290.5" x2="290.5" y1="314" y2="326" stroke="#e41414"/>
<rect x="288" y="315.5" width="5" height="8.5" fill="#e41414"/>
<line x1="298.5" x2="298.5" y1="298" y2="310.5" stroke="#0a0ae0"/>
<rect x="296" y="307" width="5" height="3.5" fill="#0a0ae0"/>
<line x1="322.5" x2="322.5" y1="306" y2="319.5" stroke="#0a0ae0"/>
<rect x="320" y="306" width="5" height="7" fill="#0a0ae0"/>
<line x1="330.5" x2="330.5" y1="301" y2="309" stroke="#e41414"/>
<rect x="328" y="302.5" width="5" height="4" fill="#e41414"/>
<line x1="338.5" x2="338.5" y1="309" y2="329.5" stroke="#e41414"/>
<rect x="336" y="310.5" width="5" height="9.5" fill="#e41414"/>
<line x1="346.5" x2="346.5" y1="319" y2="342" stroke="#0a0ae0"/>
<rect x="344" y="319.5" width="5" height="22.5" fill="#0a0ae0"/>
<line x1="354.5" x2="354.5" y1="329" y2="349" stroke="#0a0ae0"/>
<rect x="352" y="339.5" width="5" height="4.5" fill="#0a0ae0"/>
<line x1="378.5" x2="378.5" y1="343" y2="365.5" stroke="#0a0ae0"/>
<rect x="376" y="349" width="5" height="15" fill="#0a0ae0"/>
<line x1="386.5" x2="386.5" y1="359" y2="381" stroke="#e41414"/>
<rect x="384" y="366" width="5" height="8.5" fill="#e41414"/>
<line x1="394.5" x2="394.5" y1="361" y2="380" stroke="#0a0ae0"/>
<rect x="392" y="369" width="5" height="11" fill="#0a0ae0"/>
<line x1="402.5" x2="402.5" y1="369.5" y2="380" stroke="#0a0ae0"/>
<rect x="400" y="370" width="5" height="10" fill="#0a0ae0"/>
<line x1="410.5" x2="410.5" y1="361" y2="389" stroke="#e41414"/>
<rect x="408" y="362" width="5" height="17" fill="#e41414"/>
<line x1="442.5" x2="442.5" y1="338" y2="350" stroke="#e41414"/>
<rect x="440" y="340" width="5" height="10" fill="#e41414"/>
<line x1="450.5" x2="450.5" y1="332" y2="339.5" stroke="#e41414"/>
<rect x="448" y="332" width="5" height="3" fill="#e41414"/>
<line x1="458.5" x2="458.5" y1="334" y2="341" stroke="#0a0ae0"/>
<rect x="456" y="335" width="5" height="4.5" fill="#0a0ae0"/>
<line x1="466.5" x2="466.5" y1="350" y2="364" stroke="#0a0ae0"/>
<rect x="464" y="350" width="5" height="9" fill="#0a0ae0"/>
<line x1="522.5" x2="522.5" y1="370" y2="416" stroke="#0a0ae0"/>
<rect x="520" y="370" width="5" height="34" fill="#0a0ae0"/>
<line x1="546.5" x2="546.5" y1="406" y2="424" stroke="#0a0ae0"/>
<rect x="544" y="412.5" width="5" height="6.5" fill="#0a0ae0"/>
<line x1="554.5" x2="554.5" y1="415" y2="429.5" stroke="#e41414"/>
<rect x="552" y="417" width="5" height="8" fill="#e41414"/>
<line x1="562.5" x2="562.5" y1="411" y2="436" stroke="#e41414"/>
<rect x="560" y="411" width="5" height="18.5" fill="#e41414"/>
<line x1="570.5" x2="570.5" y1="412" y2="427.5" stroke="#0a0ae0"/>
<rect x="568" y="415" width="5" height="12.5" fill="#0a0ae0"/>
<line x1="578.5" x2="578.5" y1="423" y2="449" stroke="#0a0ae0"/>
<rect x="576" y="425" width="5" height="24" fill="#0a0ae0"/>
<line x1="610.5" x2="610.5" y1="439.5" y2="462.5" stroke="#0a0ae0"/>
<rect x="608" y="446" width="5" height="13" fill="#0a0ae0"/>
<line x1="618.5" x2="618.5" y1="471" y2="494.5" stroke="#0a0ae0"/>
<rect x="616" y="471" width="5" height="23.5" fill="#0a0ae0"/>
<line x1="626.5" x2="626.5" y1="471" y2="496" stroke="#e41414"/>
<rect x="624" y="472.5" width="5" height="13.5" fill="#e41414"/>
<line x1="634.5" x2="634.5" y1="464.5" y2="504" stroke="#e41414"/>
<rect x="632" y="467" width="5" height="22" fill="#e41414"/>
<line x1="658.5" x2="658.5" y1="478" y2="507.5" stroke="#0a0ae0"/>
<rect x="656" y="479" width="5" height="28.5" fill="#0a0ae0"/>
<line x1="666.5" x2="666.5" y1="522.5" y2="564" stroke="#0a0ae0"/>
<rect x="664" y="522.5" width="5" height="40" fill="#0a0ae0"/>
<line x1="674.5" x2="674.5" y1="526" y2="560" stroke="#e41414"/>
<rect x="672" y="544.5" width="5" height="5.5" fill="#e41414"/>
<line x1="682.5" x2="682.5" y1="521" y2="535.5" stroke="#e41414"/>
<rect x="680" y="524" width="5" height="11.5" fill="#e41414"/>
<line x1="690.5" x2="690.5" y1="483" y2="514" stroke="#e41414"/>
<rect x="688" y="483.5" width="5" height="29.5" fill="#e41414"/>
<line x1="714.5" x2="714.5" y1="495" y2="525.5" stroke="#0a0ae0"/>
<rect x="712" y="495" width="5" height="30.5" fill="#0a0ae0"/>
<line x1="722.5" x2="722.5" y1="494" y2="514.5" stroke="#e41414"/>
<rect x="720" y="494.5" width="5" height="19.5" fill="#e41414"/>
<line x1="730.5" x2="730.5" y1="494" y2="512" stroke="#0a0ae0"/>
<rect x="728" y="494.5" width="5" height="11.5" fill="#0a0ae0"/>
<line x1="738.5" x2="738.5" y1="485" y2="520.5" stroke="#e41414"/>
<rect x="736" y="487" width="5" height="27.5" fill="#e41414"/>
<line x1="746.5" x2="746.5" y1="484" y2="499" stroke="#0a0ae0"/>
<rect x="744" y="492.5" width="5" height="3" fill="#0a0ae0"/>
<line x1="770.5" x2="770.5" y1="465" y2="483" stroke="#e41414"/>
<rect x="768" y="467" width="5" height="16" fill="#e41414"/>
<line x1="778.5" x2="778.5" y1="470.5" y2="481" stroke="#0a0ae0"/>
<rect x="776" y="471" width="5" height="5" fill="#0a0ae0"/>
<line x1="786.5" x2="786.5" y1="490" y2="524.5" stroke="#0a0ae0"/>
<rect x="784" y="490" width="5" height="34.5" fill="#0a0ae0"/>
<line x1="794.5" x2="794.5" y1="513" y2="533" stroke="#e41414"/>
<rect x="792" y="516" width="5" height="9.5" fill="#e41414"/>
<line x1="802.5" x2="802.5" y1="510" y2="531" stroke="#0a0ae0"/>
<rect x="800" y="520.5" width="5" height="10" fill="#0a0ae0"/>
<line x1="834.5" x2="834.5" y1="521" y2="537.5" stroke="#e41414"/>
<rect x="832" y="530" width="5" height="1.5" fill="#e41414"/>
<line x1="842.5" x2="842.5" y1="513" y2="529" stroke="#0a0ae0"/>
<rect x="840" y="519.5" width="5" height="7.5" fill="#0a0ae0"/>
<line x1="850.5" x2="850.5" y1="484.5" y2="512.5" stroke="#e41414"/>
<rect x="848" y="484.5" width="5" height="28" fill="#e41414"/>
<line x1="858.5" x2="858.5" y1="481" y2="504.5" stroke="#e41414"/>
<rect x="856" y="485.5" width="5" height="9" fill="#e41414"/>
<line x1="882.5" x2="882.5" y1="471" y2="484.5" stroke="#703030"/>
<rect x="880" y="484" width="5" height="1.2" fill="#703030"/>
<line x1="890.5" x2="890.5" y1="467" y2="479.5" stroke="#0a0ae0"/>
<rect x="888" y="474" width="5" height="1.2" fill="#0a0ae0"/>
<line x1="898.5" x2="898.5" y1="476" y2="509" stroke="#0a0ae0"/>
<rect x="896" y="476" width="5" height="33" fill="#0a0ae0"/>
<line x1="906.5" x2="906.5" y1="472.5" y2="499" stroke="#e41414"/>
<rect x="904" y="480" width="5" height="17" fill="#e41414"/>
<line x1="914.5" x2="914.5" y1="491" y2="502.5" stroke="#0a0ae0"/>
<rect x="912" y="491" width="5" height="4" fill="#0a0ae0"/>
<line x1="938.5" x2="938.5" y1="459.5" y2="485.5" stroke="#e41414"/>
<rect x="936" y="463" width="5" height="22.5" fill="#e41414"/>
<line x1="946.5" x2="946.5" y1="451" y2="472" stroke="#0a0ae0"/>
<rect x="944" y="453" width="5" height="17" fill="#0a0ae0"/>
<line x1="954.5" x2="954.5" y1="449" y2="460" stroke="#e41414"/>
<rect x="952" y="454.5" width="5" height="1.5" fill="#e41414"/>
<line x1="962.5" x2="962.5" y1="459" y2="472.5" stroke="#e41414"/>
<rect x="960" y="462.5" width="5" height="3" fill="#e41414"/>
<line x1="970.5" x2="970.5" y1="476" y2="491" stroke="#0a0ae0"/>
<rect x="968" y="476" width="5" height="10" fill="#0a0ae0"/>
<line x1="994.5" x2="994.5" y1="500" y2="532.5" stroke="#0a0ae0"/>
<rect x="992" y="500" width="5" height="32.5" fill="#0a0ae0"/>
<line x1="1002.5" x2="1002.5" y1="523" y2="540.5" stroke="#0a0ae0"/>
<rect x="1000" y="525" width="5" height="7.5" fill="#0a0ae0"/>
<line x1="1010.5" x2="1010.5" y1="529" y2="537.5" stroke="#101070"/>
<rect x="1008" y="532.5" width="5" height="1.2" fill="#101070"/>
<line x1="1018.5" x2="1018.5" y1="504.5" y2="527.5" stroke="#e41414"/>
<rect x="1016" y="515" width="5" height="12" fill="#e41414"/>
<line x1="1026.5" x2="1026.5" y1="529" y2="551" stroke="#0a0ae0"/>
<rect x="1024" y="529" width="5" height="19" fill="#0a0ae0"/>
<line x1="1050.5" x2="1050.5" y1="548" y2="568" stroke="#0a0ae0"/>
<rect x="1048" y="551" width="5" height="15" fill="#0a0ae0"/>
<line x1="1058.5" x2="1058.5" y1="556" y2="580" stroke="#e41414"/>
<rect x="1056" y="557" width="5" height="20" fill="#e41414"/>
<line x1="1066.5" x2="1066.5" y1="526" y2="547" stroke="#e41414"/>
<rect x="1064" y="542" width="5" height="2.5" fill="#e41414"/>
<line x1="1074.5" x2="1074.5" y1="548" y2="580" stroke="#0a0ae0"/>
<rect x="1072" y="551" width="5" height="24" fill="#0a0ae0"/>
<line x1="1082.5" x2="1082.5" y1="562.5" y2="594" stroke="#0a0ae0"/>
<rect x="1080" y="568" width="5" height="21" fill="#0a0ae0"/>
<line x1="1106.5" x2="1106.5" y1="596" y2="622.5" stroke="#0a0ae0"/>
<rect x="1104" y="599.5" width="5" height="22.5" fill="#0a0ae0"/>
<line x1="1114.5" x2="1114.5" y1="606" y2="622.5" stroke="#e41414"/>
<rect x="1112" y="609" width="5" height="10.5" fill="#e41414"/>
<line x1="1122.5" x2="1122.5" y1="578" y2="595.5" stroke="#e41414"/>
<rect x="1120" y="587" width="5" height="8.5" fill="#e41414"/>
<line x1="1138.5" x2="1138.5" y1="569" y2="584" stroke="#e41414"/>
<rect x="1136" y="570" width="5" height="12" fill="#e41414"/>
<line x1="1162.5" x2="1162.5" y1="562.5" y2="574" stroke="#e41414"/>
<rect x="1160" y="570.5" width="5" height="1.5" fill="#e41414"/>
<line x1="1170.5" x2="1170.5" y1="547" y2="564" stroke="#e41414"/>
<rect x="1168" y="550" width="5" height="9" fill="#e41414"/>
<line x1="1178.5" x2="1178.5" y1="553" y2="562.5" stroke="#e41414"/>
<rect x="1176" y="553" width="5" height="4.5" fill="#e41414"/>
<line x1="1186.5" x2="1186.5" y1="561" y2="571" stroke="#101070"/>
<rect x="1184" y="560.5" width="5" height="1.2" fill="#101070"/>
<line x1="1194.5" x2="1194.5" y1="540" y2="569" stroke="#e41414"/>
<rect x="1192" y="545" width="5" height="18" fill="#e41414"/>
<line x1="1218.5" x2="1218.5" y1="553" y2="575" stroke="#0a0ae0"/>
<rect x="1216" y="553" width="5" height="15" fill="#0a0ae0"/>
<line x1="1226.5" x2="1226.5" y1="547.5" y2="567.5" stroke="#e41414"/>
<rect x="1224" y="557" width="5" height="10" fill="#e41414"/>
<line x1="1234.5" x2="1234.5" y1="517" y2="544" stroke="#e41414"/>
<rect x="1232" y="517" width="5" height="27" fill="#e41414"/>
<line x1="1242.5" x2="1242.5" y1="502" y2="522" stroke="#e41414"/>
<rect x="1240" y="502" width="5" height="15.5" fill="#e41414"/>
<line x1="1250.5" x2="1250.5" y1="504.5" y2="515.5" stroke="#e41414"/>
<rect x="1248" y="509" width="5" height="1.2" fill="#e41414"/>
<line x1="1274.5" x2="1274.5" y1="496" y2="514.5" stroke="#e41414"/>
<rect x="1272" y="496" width="5" height="18" fill="#e41414"/>
<line x1="1282.5" x2="1282.5" y1="501" y2="514.5" stroke="#0a0ae0"/>
<rect x="1280" y="502.5" width="5" height="10" fill="#0a0ae0"/>
<line x1="1290.5" x2="1290.5" y1="505" y2="532" stroke="#0a0ae0"/>
<rect x="1288" y="509" width="5" height="15" fill="#0a0ae0"/>
<line x1="1298.5" x2="1298.5" y1="526" y2="540" stroke="#0a0ae0"/>
<rect x="1296" y="529" width="5" height="6.5" fill="#0a0ae0"/>
<line x1="1306.5" x2="1306.5" y1="506" y2="529" stroke="#e41414"/>
<rect x="1304" y="507" width="5" height="20.5" fill="#e41414"/>
<line x1="1330.5" x2="1330.5" y1="521" y2="542.5" stroke="#0a0ae0"/>
<rect x="1328" y="521" width="5" height="16.5" fill="#0a0ae0"/>
<line x1="1338.5" x2="1338.5" y1="527.5" y2="540" stroke="#e41414"/>
<rect x="1336" y="532.5" width="5" height="3.5" fill="#e41414"/>
<line x1="1346.5" x2="1346.5" y1="515" y2="524" stroke="#e41414"/>
<rect x="1344" y="520.5" width="5" height="1.2" fill="#e41414"/>
<line x1="1354.5" x2="1354.5" y1="494.5" y2="509" stroke="#e41414"/>
<rect x="1352" y="501" width="5" height="8" fill="#e41414"/>
<line x1="1362.5" x2="1362.5" y1="495.5" y2="506" stroke="#e41414"/>
<rect x="1360" y="495.5" width="5" height="4" fill="#e41414"/>
<line x1="1386.5" x2="1386.5" y1="477" y2="484" stroke="#e41414"/>
<rect x="1384" y="479" width="5" height="5" fill="#e41414"/>
<line x1="1394.5" x2="1394.5" y1="486" y2="492.5" stroke="#0a0ae0"/>
<rect x="1392" y="487" width="5" height="3.5" fill="#0a0ae0"/>
<line x1="1402.5" x2="1402.5" y1="477.5" y2="498" stroke="#e41414"/>
<rect x="1400" y="488" width="5" height="10" fill="#e41414"/>
<line x1="1410.5" x2="1410.5" y1="482.5" y2="494.5" stroke="#0a0ae0"/>
<rect x="1408" y="485.5" width="5" height="7" fill="#0a0ae0"/>
<line x1="1418.5" x2="1418.5" y1="465" y2="485.5" stroke="#e41414"/>
<rect x="1416" y="466" width="5" height="19.5" fill="#e41414"/>
<line x1="1442.5" x2="1442.5" y1="456" y2="476" stroke="#101070"/>
<rect x="1440" y="463.5" width="5" height="1.2" fill="#101070"/>
<line x1="1458.5" x2="1458.5" y1="458" y2="474.5" stroke="#e41414"/>
<rect x="1456" y="467" width="5" height="5" fill="#e41414"/>
<line x1="1466.5" x2="1466.5" y1="465" y2="477.5" stroke="#0a0ae0"/>
<rect x="1464" y="471" width="5" height="4" fill="#0a0ae0"/>
<line x1="1474.5" x2="1474.5" y1="451" y2="460.5" stroke="#e41414"/>
<rect x="1472" y="453" width="5" height="7.5" fill="#e41414"/>
<line x1="1514.5" x2="1514.5" y1="441" y2="455.5" stroke="#0a0ae0"/>
<rect x="1512" y="445" width="5" height="4.5" fill="#0a0ae0"/>
<line x1="1522.5" x2="1522.5" y1="454" y2="461" stroke="#0a0ae0"/>
<rect x="1520" y="457" width="5" height="4" fill="#0a0ae0"/>
<line x1="1530.5" x2="1530.5" y1="460" y2="484" stroke="#0a0ae0"/>
<rect x="1528" y="461" width="5" height="21.5" fill="#0a0ae0"/>
<polyline fill="none" stroke="#b83030" points="666.5,574 666.5,635.5 954.5,635.5 954.5,566"/>
<polyline fill="none" stroke="#b83030" points="954.5,412 954.5,352.5 1106.5,352.5 1106.5,592"/>
<polyline fill="none" stroke="#b83030" points="1106.5,629 1106.5,688.5 1474.5,688.5 1474.5,472"/>
<g shape-rendering="auto">
<circle cx="666.5" cy="574" r="2.6" fill="#cc2020"/>
<circle cx="954.5" cy="566" r="2.6" fill="#cc2020"/>
<circle cx="954.5" cy="412.5" r="2.6" fill="#cc2020"/>
<circle cx="1106.5" cy="592.5" r="2.6" fill="#cc2020"/>
<circle cx="1106.5" cy="629.5" r="2.6" fill="#cc2020"/>
<circle cx="1474.5" cy="472.5" r="2.6" fill="#cc2020"/>
</g>
<text class="jt j" text-anchor="middle" x="672.0 684.0" y="649.5">本数</text><text class="jt" transform="scale(0.86,1)" text-anchor="middle" x="805.8 812.8 819.8 826.7" y="649.5">(26)</text><text class="jt j" text-anchor="middle" x="726.0 738.0 750.0" y="649.5">収益率</text><text class="jt" transform="scale(0.86,1)" text-anchor="middle" x="882.6 889.5 896.5 903.5 910.5 917.4" y="649.5">(11.60</text><text class="jt" transform="scale(0.585,1)" text-anchor="middle" x="1359.4" y="649.5">%</text><text class="jt" transform="scale(0.86,1)" text-anchor="middle" x="931.4" y="649.5">)</text>
<text class="jt j" text-anchor="middle" x="960.0 972.0" y="344.5">本数</text><text class="jt" transform="scale(0.86,1)" text-anchor="middle" x="1140.7 1147.7 1154.7 1161.6" y="344.5">(14)</text><text class="jt j" text-anchor="middle" x="1014.0 1026.0 1038.0" y="344.5">収益率</text><text class="jt" transform="scale(0.86,1)" text-anchor="middle" x="1217.4 1224.4 1231.4 1238.4 1245.3 1252.3 1259.3" y="344.5">(-15.99</text><text class="jt" transform="scale(0.585,1)" text-anchor="middle" x="1862.2" y="344.5">%</text><text class="jt" transform="scale(0.86,1)" text-anchor="middle" x="1273.3" y="344.5">)</text>
<text class="jt j" text-anchor="middle" x="1112.0 1124.0" y="703.5">本数</text><text class="jt" transform="scale(0.86,1)" text-anchor="middle" x="1317.4 1324.4 1331.4 1338.4" y="703.5">(33)</text><text class="jt j" text-anchor="middle" x="1166.0 1178.0 1190.0" y="703.5">収益率</text><text class="jt" transform="scale(0.86,1)" text-anchor="middle" x="1394.2 1401.2 1408.1 1415.1 1422.1 1429.1" y="703.5">(19.19</text><text class="jt" transform="scale(0.585,1)" text-anchor="middle" x="2111.8" y="703.5">%</text><text class="jt" transform="scale(0.86,1)" text-anchor="middle" x="1443.0" y="703.5">)</text>
<text class="jt j" text-anchor="middle" x="19.4 31.4" y="151.6">日経</text><text class="jt" transform="scale(0.86,1)" text-anchor="middle" x="47.0 54.0 60.9 67.9" y="151.6">225(</text><text class="jt j" text-anchor="middle" x="73.4" y="151.6">日</text><text class="jt" transform="scale(0.86,1)" text-anchor="middle" x="95.8" y="151.6">,</text><text class="jt" transform="scale(0.86,1)" text-anchor="middle" x="109.8 116.7 123.7 130.7 137.7 144.7 151.6 158.6 165.6 172.6" y="151.6">2007/02/19</text><text class="jt" transform="scale(0.86,1)" text-anchor="middle" x="186.5" y="151.6">-</text><text class="jt" transform="scale(0.86,1)" text-anchor="middle" x="200.5 207.4 214.4 221.4 228.4 235.3 242.3 249.3 256.3 263.3" y="151.6">2008/05/09</text><text class="jt" transform="scale(0.86,1)" text-anchor="middle" x="277.2" y="151.6">)</text>
<text class="jt j" text-anchor="middle" x="267.0 279.0 291.0 303.0 315.0 327.0 339.0 351.0 363.0" y="151.6">ボリンジャーバンド</text><text class="jt" transform="scale(0.86,1)" text-anchor="middle" x="432.6" y="151.6">(</text><text class="jt" transform="scale(0.86,1)" text-anchor="middle" x="446.5 453.5 460.5 467.4 474.4 481.4" y="151.6">Close,</text><text class="jt" transform="scale(0.86,1)" text-anchor="middle" x="495.3 502.3 509.3" y="151.6">20,</text><text class="jt" transform="scale(0.86,1)" text-anchor="middle" x="523.3 530.2 537.2 544.2" y="151.6">2.0,</text><text class="jt" transform="scale(0.86,1)" text-anchor="middle" x="558.1 565.1 572.1 579.1 586.0" y="151.6">-2.0,</text><text class="jt" transform="scale(0.86,1)" text-anchor="middle" x="600.0" y="151.6">0</text><text class="jt" transform="scale(0.86,1)" text-anchor="middle" x="614.0" y="151.6">)</text>
<text class="jt j" text-anchor="middle" x="556.0 568.0 580.0 592.0" y="151.6">移動平均</text><text class="jt" transform="scale(0.86,1)" text-anchor="middle" x="698.8" y="151.6">(</text><text class="jt" transform="scale(0.86,1)" text-anchor="middle" x="712.8 719.8 726.7 733.7 740.7 747.7" y="151.6">Close,</text><text class="jt" transform="scale(0.86,1)" text-anchor="middle" x="761.6 768.6" y="151.6">75</text><text class="jt" transform="scale(0.86,1)" text-anchor="middle" x="782.6" y="151.6">)</text>
<text class="jt j" text-anchor="middle" x="703.0 715.0 727.0 739.0" y="151.6">移動平均</text><text class="jt" transform="scale(0.86,1)" text-anchor="middle" x="869.8" y="151.6">(</text><text class="jt" transform="scale(0.86,1)" text-anchor="middle" x="883.7 890.7 897.7 904.7 911.6 918.6" y="151.6">Close,</text><text class="jt" transform="scale(0.86,1)" text-anchor="middle" x="932.6 939.5" y="151.6">25</text><text class="jt" transform="scale(0.86,1)" text-anchor="middle" x="953.5" y="151.6">)</text>
<text class="jt j" text-anchor="middle" x="849.0 861.0 873.0 885.0 897.0 909.0 921.0 933.0" y="151.6">期間高安表示機能</text>
<text class="jt" transform="scale(0.86,1)" text-anchor="middle" x="18.0 25.0 32.0 39.0" y="744.5">RSI(</text><text class="jt" transform="scale(0.86,1)" text-anchor="middle" x="52.9 59.9 66.9 73.8 80.8 87.8" y="744.5">Close,</text><text class="jt" transform="scale(0.86,1)" text-anchor="middle" x="101.7 108.7 115.7" y="744.5">14,</text><text class="jt" transform="scale(0.86,1)" text-anchor="middle" x="129.7 136.6 143.6" y="744.5">25,</text><text class="jt" transform="scale(0.86,1)" text-anchor="middle" x="157.6 164.5" y="744.5">80</text><text class="jt" transform="scale(0.86,1)" text-anchor="middle" x="178.5" y="744.5">)</text>
<text class="jt j" text-anchor="middle" x="18.5 30.5 42.5 54.5 66.5 78.5 90.5 102.5 114.5 126.5" y="879.5">サイコロジカルライン</text><text class="jt" transform="scale(0.86,1)" text-anchor="middle" x="157.6" y="879.5">(</text><text class="jt" transform="scale(0.86,1)" text-anchor="middle" x="171.5 178.5 185.5" y="879.5">10,</text><text class="jt" transform="scale(0.86,1)" text-anchor="middle" x="199.4 206.4 213.4" y="879.5">75,</text><text class="jt" transform="scale(0.86,1)" text-anchor="middle" x="227.3 234.3" y="879.5">25</text><text class="jt" transform="scale(0.86,1)" text-anchor="middle" x="248.3" y="879.5">)</text>
<line x1="9" x2="1621" y1="732.5" y2="732.5" stroke="#000"/>
<line x1="9" x2="1621" y1="867.5" y2="867.5" stroke="#000"/>
<line x1="9" x2="1621" y1="947.5" y2="947.5" stroke="#000"/>
<line x1="1535.5" x2="1535.5" y1="138" y2="977" stroke="#000"/>
<text class="ax" transform="scale(0.84,1)" text-anchor="middle" x="593.9 601.8 609.8 617.8" y="967.1">2008</text>
<text class="ax" transform="scale(0.84,1)" text-anchor="middle" x="1165.3 1173.3 1181.3 1189.2 1197.2" y="967.1">08/03</text>
<text class="ax" transform="scale(0.84,1)" text-anchor="middle" x="1748.6 1756.6 1764.6 1772.6 1780.5" y="967.1">08/05</text>
<rect x="1604.5" y="141.5" width="14" height="11" fill="#fff" stroke="#999"/>
<path d="M1606.5 144.5 h10 l-5 5.5z" fill="#666" shape-rendering="auto"/>
<rect x="1604.5" y="735.5" width="14" height="11" fill="#fff" stroke="#999"/>
<path d="M1606.5 738.5 h10 l-5 5.5z" fill="#666" shape-rendering="auto"/>
<rect x="1604.5" y="870.5" width="14" height="11" fill="#fff" stroke="#999"/>
<path d="M1606.5 873.5 h10 l-5 5.5z" fill="#666" shape-rendering="auto"/>
</svg>
<div style="left:9px;top:135.8px;width:1611px;height:2.2px;background:#484848"></div>
<div style="left:9px;top:977px;width:1612px;height:1px;background:#fff"></div>
<div style="left:9px;top:978px;width:1288px;height:17px;background:#dcdcdc;background-image:repeating-conic-gradient(#fff 0 25%,#c4c4c4 0 50%);background-size:2px 2px"></div>
<div style="left:9px;top:978.5px;width:14px;height:16px;background:#d0d0d0;border:1px solid;border-color:#fff #555 #555 #fff"><svg width="12" height="14"><path d="M7.500 3 L3.500 7 L7.500 11z" fill="#000"/></svg></div>
<div style="left:742.5px;top:978.5px;width:539.5px;height:16px;background:#c0c0c0;border:1px solid;border-color:#fff #555 #555 #fff"></div>
<div style="left:9px;top:994.6px;width:1288px;height:1px;background:#111"></div>
<div style="left:1282px;top:978.5px;width:14.5px;height:16px;background:#d8d8d8;border:1px solid;border-color:#fff #555 #555 #fff"><svg width="12" height="14"><path d="M4.500 3 L8.500 7 L4.500 11z" fill="#000"/></svg></div>
<div style="left:1296.5px;top:978px;width:324.5px;height:17px;background:linear-gradient(#e4e4e4,#d0d0d0)"></div>
<div style="left:1301.5px;top:981.5px;width:109px;height:4px;background:#222;border-bottom:1px solid #888"></div>
<div style="left:1309px;top:979.5px;width:5px;height:10.5px;background:#555;border:1px solid #111"></div>
<div style="left:1303px;top:992px;width:1px;height:2.5px;background:#333"></div>
<div style="left:1408px;top:992px;width:1px;height:2.5px;background:#333"></div>
<div style="left:1417px;top:978.5px;width:16.5px;height:16px;background:#f0f0f0;border:1px solid #aaa;border-color:#fff #999 #999 #fff"><svg width="15" height="15" style="position:absolute;left:0;top:-0.500px"><path d="M2 7.500 L7 3 V12z" fill="#0a3a8a"/><rect x="8" y="3" width="2.200" height="9" fill="#0a3a8a"/></svg></div>
<div style="left:1434px;top:978.5px;width:16.5px;height:16px;background:#f0f0f0;border:1px solid #aaa;border-color:#fff #999 #999 #fff"><svg width="15" height="15" style="position:absolute;left:0;top:-0.500px"><path d="M2.500 7.500h10M7.500 2.500v10" stroke="#111" stroke-width="1.800"/></svg></div>
<div style="left:1451px;top:978.5px;width:16.5px;height:16px;background:#f0f0f0;border:1px solid #aaa;border-color:#fff #999 #999 #fff"><svg width="15" height="15" style="position:absolute;left:0;top:-0.500px"><path d="M3 7.500h9" stroke="#111" stroke-width="1.800"/></svg></div>
<div style="left:1468px;top:978.5px;width:16.5px;height:16px;background:#f0f0f0;border:1px solid #aaa;border-color:#fff #999 #999 #fff"><svg width="15" height="15" style="position:absolute;left:0;top:-0.500px"><path d="M1 7.500 L5.500 3.500 V11.500z M14 7.500 L9.500 3.500 V11.500z" fill="#0a3a8a"/><path d="M7.500 2v11" stroke="#0a3a8a" stroke-width="1.600"/></svg></div>
<div style="left:1485px;top:978.5px;width:16.5px;height:16px;background:#f0f0f0;border:1px solid #aaa;border-color:#fff #999 #999 #fff"><svg width="15" height="15" style="position:absolute;left:0;top:-0.500px"><rect x="5" y="5" width="5" height="5" fill="#0a3a8a"/></svg></div>
<div style="left:1502px;top:978.5px;width:16.5px;height:16px;background:#f0f0f0;border:1px solid #aaa;border-color:#fff #999 #999 #fff"><svg width="15" height="15" style="position:absolute;left:0;top:-0.500px"><path d="M5 3 L10.500 7.500 L5 12z" fill="#0a3a8a"/></svg></div>
<div style="left:1519px;top:978.5px;width:16.5px;height:16px;background:#f0f0f0;border:1px solid #aaa;border-color:#fff #999 #999 #fff"><svg width="15" height="15" style="position:absolute;left:0;top:-0.500px"><text x="7.500" y="11.500" text-anchor="middle" class="sbt">D</text></svg></div>
<div style="left:1536px;top:978.5px;width:16.5px;height:16px;background:#f0f0f0;border:1px solid #aaa;border-color:#fff #999 #999 #fff"><svg width="15" height="15" style="position:absolute;left:0;top:-0.500px"><text x="7.500" y="11.500" text-anchor="middle" class="sbt">L</text></svg></div>
<div style="left:1553px;top:978.5px;width:16.5px;height:16px;background:#f0f0f0;border:1px solid #aaa;border-color:#fff #999 #999 #fff"><svg width="15" height="15" style="position:absolute;left:0;top:-0.500px"><text x="7.500" y="11.500" text-anchor="middle" class="sbt">R</text></svg></div>
<div style="left:1570px;top:978.5px;width:16.5px;height:16px;background:#f0f0f0;border:1px solid #aaa;border-color:#fff #999 #999 #fff"><svg width="15" height="15" style="position:absolute;left:0;top:-0.500px"><circle cx="6.500" cy="6.500" r="4" fill="none" stroke="#111" stroke-width="1.400"/><path d="M9.500 9.500 L13 13" stroke="#111" stroke-width="2"/><path d="M4.500 6.500h4M6.500 4.500v4" stroke="#111" stroke-width="1.200"/></svg></div>
<div style="left:1587px;top:978.5px;width:16.5px;height:16px;background:#f0f0f0;border:1px solid #aaa;border-color:#fff #999 #999 #fff"><svg width="15" height="15" style="position:absolute;left:0;top:-0.500px"><path d="M3 3 L12 12 M12 3 L3 12" stroke="#111" stroke-width="2"/></svg></div>
<div style="left:1604px;top:978.5px;width:16.5px;height:16px;background:#f0f0f0;border:1px solid #aaa;border-color:#fff #999 #999 #fff"><svg width="15" height="15" style="position:absolute;left:0;top:-0.500px"><rect x="2" y="3" width="2.200" height="9" fill="#0a3a8a"/><path d="M6 6h3.500V3l4.500 4.500 L9.500 12V9H6z" fill="#0a3a8a"/></svg></div>
<div style="left:9px;top:995px;width:1612px;height:21px;background:#fff"></div>
<div style="left:11px;top:996.5px;width:56px;height:18.5px;background:#f4f4f4;border:1px solid #666;border-color:#ddd #444 #444 #ddd;box-shadow:1px 1px 0 #999"><svg class="s" style="left:2px;top:0.3px" width="46.5" height="16"><text x="0" y="12.32" font-size="12" fill="#000" font-weight="bold" textLength="46.5" lengthAdjust="spacingAndGlyphs">日経225</text></svg></div>
<div style="left:1303px;top:997.5px;width:78.5px;height:17.8px;background:linear-gradient(#fff 50%,#dedede);border-right:2px solid #222"><svg class="s" style="left:6.75px;top:0.3px" width="63" height="16"><text x="0" y="12.32" font-size="12" fill="#000" textLength="63" lengthAdjust="spacingAndGlyphs">チャート追加</text></svg></div>
<div style="left:1383px;top:997.5px;width:78.5px;height:17.8px;background:linear-gradient(#fff 50%,#dedede);border-right:2px solid #222"><svg class="s" style="left:6.75px;top:0.3px" width="63" height="16"><text x="0" y="12.32" font-size="12" fill="#000" textLength="63" lengthAdjust="spacingAndGlyphs">チャート削除</text></svg></div>
<div style="left:1463px;top:997.5px;width:78.5px;height:17.8px;background:linear-gradient(#fff 50%,#dedede);border-right:2px solid #222"><svg class="s" style="left:14.25px;top:0.3px" width="48" height="16"><text x="0" y="12.32" font-size="12" fill="#000" textLength="48" lengthAdjust="spacingAndGlyphs">表示切替</text></svg></div>
<div style="left:1543px;top:997.5px;width:78px;height:17.8px;background:linear-gradient(#fff 50%,#dedede);border-right:2px solid #222"><svg class="s" style="left:14px;top:0.3px" width="48" height="16"><text x="0" y="12.32" font-size="12" fill="#000" textLength="48" lengthAdjust="spacingAndGlyphs">画面設定</text></svg></div>
<div style="left:0px;top:1015.3px;width:1628px;height:1.5px;background:#000"></div>
<div style="left:0px;top:1016.8px;width:1628px;height:2.2px;background:#4a4a4a"></div>
<div style="left:0px;top:1019px;width:1628px;height:2px;background:#c2c2c2"></div>
<div style="left:0px;top:1021px;width:1628px;height:1px;background:#e4e4e4"></div>
<div style="left:0px;top:1022px;width:1628px;height:25px;background:#fff;border-top:1.500px solid #333"></div>
<div style="left:0px;top:1047px;width:1628px;height:1.5px;background:#000"></div>
<div style="left:0px;top:1048.5px;width:1628px;height:1.5px;background:#ddd"></div>
<div style="left:0px;top:1022px;width:30px;height:25.5px;background:linear-gradient(90deg,#2e2e2e,#0c0c0c)"></div>
<div style="left:9.5px;top:1028.5px;width:13px;height:13px;background:#fff;border:1px solid #888;box-shadow:1px 1px 0 #aaa"></div>
<div style="left:29.5px;top:1024px;width:53px;height:22px;background:#1a1a1a;border:1px solid #555"><svg class="s" style="left:8px;top:2.5px" width="35" height="16"><text x="0" y="12.32" font-size="12" fill="#fff" textLength="35" lengthAdjust="spacingAndGlyphs">TOPIX</text></svg></div>
<div class="cell" style="left:83px;top:1024px;width:36px;height:23px;"><svg class="s" style="left:15px;top:3px" width="5" height="16"><text x="0" y="12.32" font-size="12" fill="#902040" textLength="5" lengthAdjust="spacingAndGlyphs">1</text></svg></div>
<div class="cell" style="left:119px;top:1024px;width:35px;height:23px;"><svg class="s" style="left:8.5px;top:3px" width="17" height="16"><text x="0" y="12.32" font-size="12" fill="#e060a0" textLength="17" lengthAdjust="spacingAndGlyphs">236</text></svg></div>
<div class="cell" style="left:154px;top:1024px;width:35px;height:23px;"><svg class="s" style="left:11.5px;top:3px" width="11" height="16"><text x="0" y="12.32" font-size="12" fill="#000" textLength="11" lengthAdjust="spacingAndGlyphs">84</text></svg></div>
<div class="cell" style="left:189px;top:1024px;width:35px;height:23px;"><svg class="s" style="left:4.5px;top:3px" width="25" height="16"><text x="0" y="12.32" font-size="12" fill="#20a0c0" textLength="25" lengthAdjust="spacingAndGlyphs">1,401</text></svg></div>
<div class="cell" style="left:224px;top:1024px;width:35px;height:23px;"><svg class="s" style="left:14px;top:3px" width="6" height="16"><text x="0" y="12.32" font-size="12" fill="#102080" textLength="6" lengthAdjust="spacingAndGlyphs">2</text></svg></div>
<div style="left:258px;top:1024px;width:3px;height:23px;background:#fff;border-left:1px solid #555"></div>
<div style="left:261px;top:1024px;width:292px;height:22.5px;background:#fff;border:1px solid #444;border-width:1px 2px 2px 1px"></div>
<svg class="s" style="left:264px;top:1027px" width="33" height="16"><text x="0" y="12.32" font-size="12" fill="#888" textLength="33" lengthAdjust="spacingAndGlyphs">[16:00]</text></svg>
<svg class="s" style="left:303px;top:1027px" width="41.5" height="16"><text x="0" y="12.32" font-size="12" fill="#000" textLength="41.5" lengthAdjust="spacingAndGlyphs">日経225</text></svg>
<svg class="s" style="left:360px;top:1027px" width="46" height="16"><text x="0" y="12.32" font-size="12" fill="#000" textLength="46" lengthAdjust="spacingAndGlyphs">13,655.34</text></svg>
<div style="left:429px;top:1028px;width:14px;height:14px;"><svg width="14" height="14"><path d="M0.500 1h13l-6.500 12.500z" fill="#1010e0"/></svg></div>
<svg class="s" style="left:446px;top:1027px" width="32.5" height="16"><text x="0" y="12.32" font-size="12" fill="#102080" textLength="32.5" lengthAdjust="spacingAndGlyphs">287.92</text></svg>
<svg class="s" style="left:488px;top:1027px" width="50" height="16"><text x="0" y="12.32" font-size="12" fill="#102080" textLength="50" lengthAdjust="spacingAndGlyphs">（-2.06%）</text></svg>
<div style="left:555px;top:1027px;width:15.5px;height:16px;background:#222;border-radius:2px"><svg width="16" height="16"><rect x="3" y="3" width="9.500" height="10" rx="1.500" fill="#e8e8f0"/><path d="M7.700 4.500 L11 8h-2v3.500h-2.600V8h-2z" fill="#223"/></svg></div>
<div style="left:1590px;top:1022px;width:38px;height:25.5px;background:#333"></div>
<div style="left:1593px;top:1028px;width:13.5px;height:14px;background:#e8e8ec;border-radius:2px"><svg width="13" height="14"><path d="M6.700 3 L10 6.500h-2v3h-2.600v-3h-2z" fill="#223"/></svg></div>
<div style="left:1609px;top:1028px;width:14px;height:14px;background:#e8e8ec;border-radius:2px"><svg width="14" height="14"><rect x="4" y="4" width="6" height="1.500" fill="#445"/></svg></div>
<div style="left:1271px;top:1033px;width:354px;height:14px;background:#9aa97c"></div>
<div style="left:1274px;top:1036px;width:10px;height:8px;border:1px solid #e8f0d8"></div>
<div style="left:1288px;top:1036px;width:9px;height:8px;background:repeating-linear-gradient(90deg,#107010 0 2px,transparent 2px 3px)"></div>
<svg class="s" style="left:1319px;top:1032.5px" width="30" height="16"><text x="0" y="11.24" font-size="9" fill="#2a7a2a" textLength="30" lengthAdjust="spacingAndGlyphs">558.34</text></svg>
<svg class="s" style="left:1355px;top:1032.5px" width="30" height="16"><text x="0" y="11.24" font-size="9" fill="#2a7a2a" textLength="30" lengthAdjust="spacingAndGlyphs">527.48</text></svg>
<div style="left:1391px;top:1036px;width:12px;height:8px;border:1px solid #e8f0d8"></div>
<div style="left:1408px;top:1036px;width:2px;height:8px;background:#107010"></div>
<svg class="s" style="left:1440px;top:1032.5px" width="25" height="16"><text x="0" y="11.24" font-size="9" fill="#2a7a2a" textLength="25" lengthAdjust="spacingAndGlyphs">490.3</text></svg>
<svg class="s" style="left:1472px;top:1032.5px" width="25" height="16"><text x="0" y="11.24" font-size="9" fill="#2a7a2a" textLength="25" lengthAdjust="spacingAndGlyphs">904.8</text></svg>
<div style="left:1503px;top:1036px;width:9px;height:9px;border:1px solid #e8f0d8"></div>
<div style="left:1515px;top:1036px;width:18px;height:8px;background:repeating-linear-gradient(90deg,#107010 0 2px,transparent 2px 3px)"></div>
<svg class="s" style="left:1552px;top:1032.5px" width="16" height="16"><text x="0" y="11.6" font-size="10" fill="#2a7a2a" textLength="16" lengthAdjust="spacingAndGlyphs">58%</text></svg>
<div style="left:1574.5px;top:1035.5px;width:10px;height:10px;border:1px solid #e8f0d8;border-radius:1.500px"></div>
<div style="left:1587.5px;top:1035.5px;width:10px;height:10px;border:1px solid #e8f0d8;border-radius:1.500px"></div>
<div style="left:1600.5px;top:1035.5px;width:10px;height:10px;border:1px solid #223;border-radius:1.500px"></div>
<div style="left:1613.5px;top:1035.5px;width:10px;height:10px;border:1px solid #223;border-radius:1.500px"></div>
<div style="left:1628px;top:0px;width:2.2px;height:1050px;background:#fff"></div>
<div style="left:1630.2px;top:0px;width:50px;height:1050px;background:#c0c0c0"></div>
<div class="tb" style="left:1632px;top:2px;width:46px;height:21.5px;border-width:1px 2px 2px 1px;border-color:#fff #111 #111 #fff;box-shadow:none"><svg style="position:absolute;left:1.500px;top:2px" width="18" height="16" viewBox="0 0 21 18"><path d="M2 3 q3.500-2 7 0 l-1 5 q-3.500-2-7 0z" fill="#e8502a"/><path d="M10 3.300 q3.500 2 7 0 l-1 5 q-3.500 2-7 0z" fill="#6ab82a"/><path d="M0.800 9 q3.500-2 7 0 l-1 5 q-3.500-2-7 0z" fill="#2a6ad8"/><path d="M8.800 9.300 q3.500 2 7 0 l-1 5 q-3.500 2-7 0z" fill="#f0c020"/></svg></div>
<div style="left:1635px;top:27.5px;width:16px;height:17px;"><svg width="16" height="17"><circle cx="8" cy="9" r="7" fill="#e6f0fa" stroke="#9cc0e4"/><circle cx="8" cy="9" r="2" fill="#b8d4ee"/><path d="M5.800 12V3.500l6.200-1.300v8.300" fill="none" stroke="#3a86d0" stroke-width="1.800"/><path d="M5.800 5.500l6.200-1.300" stroke="#3a86d0" stroke-width="1.500"/><ellipse cx="4.600" cy="12" rx="2" ry="1.600" fill="#3a86d0"/><ellipse cx="10.800" cy="10.600" rx="2" ry="1.600" fill="#3a86d0"/></svg></div>
<div style="left:1658px;top:28px;width:16px;height:16px;"><svg width="16" height="16"><circle cx="8" cy="8" r="7.300" fill="#e8761c"/><circle cx="8.800" cy="6.800" r="4.600" fill="#2f6cc4"/><path d="M6.500 3.500 q3-1.500 5 1 q-2-0.500-3 1z" fill="#58a0e0"/><path d="M1.200 6 q1.500 4.500 6.300 4 q3-0.500 4.500-3 q2 4-1.500 7 q-4 2.500-8-1 q-2.500-3-1.300-7z" fill="#f0982a"/><path d="M2 11 q3 4.500 8 3" stroke="#c8401c" stroke-width="1.200" fill="none"/></svg></div>
<div style="left:1635px;top:50px;width:16px;height:16px;"><svg width="16" height="16"><circle cx="8" cy="8" r="7.300" fill="#e8761c"/><circle cx="8.800" cy="6.800" r="4.600" fill="#2f6cc4"/><path d="M6.500 3.500 q3-1.500 5 1 q-2-0.500-3 1z" fill="#58a0e0"/><path d="M1.200 6 q1.500 4.500 6.300 4 q3-0.500 4.500-3 q2 4-1.500 7 q-4 2.500-8-1 q-2.500-3-1.300-7z" fill="#f0982a"/><path d="M2 11 q3 4.500 8 3" stroke="#c8401c" stroke-width="1.200" fill="none"/></svg></div>
<div style="left:1658px;top:50.5px;width:17px;height:17px;"><svg width="17" height="17"><circle cx="8" cy="8" r="6.800" fill="#2f8fd2"/><circle cx="8" cy="8" r="3.800" fill="#9ad4f2"/><path d="M8 8 L8 5 M8 8 L10.300 7" stroke="#fff" stroke-width="1.200"/><path d="M10.500 11 L15 14.500 L12 15z" fill="#2f8fd2"/></svg></div>
<div style="left:1635px;top:72px;width:16px;height:16px;"><svg width="16" height="16"><path d="M2 14 L4 9 L11 2 L14 5 L7 12z" fill="#d8e4f4" stroke="#446"/><path d="M10 3 L13 6 L15 4 L12 1z" fill="#d84030"/><path d="M2 14 L4 9 L7 12z" fill="#444"/></svg></div>
<div style="left:1657.5px;top:72.5px;width:16px;height:16px;"><svg width="16" height="16"><circle cx="8" cy="8" r="7.300" fill="#e88a28"/><path d="M8 0.700 A7.300 7.300 0 0 1 15.300 8 L8 8z" fill="#5aac3a"/><path d="M15.300 8 A7.300 7.300 0 0 1 8 15.300 L8 8z" fill="#e8c838"/><path d="M0.700 8 A7.300 7.300 0 0 0 8 15.300 L8 8z" fill="#3a6ccc"/><circle cx="8" cy="8" r="3.600" fill="#d8dce8"/><path d="M6.500 5.300 L11.300 8 L6.500 10.700z" fill="#222"/></svg></div>
<div style="left:1634px;top:94px;width:16px;height:16px;"><svg width="16" height="16"><rect x="2" y="3" width="11" height="11" rx="2" fill="#e8f4fc" stroke="#2888d0" stroke-width="1.800"/><path d="M5 8.500 a3 3 0 1 0 3-3 M8 3.500v4l-2.500-2z" fill="none" stroke="#2060a8" stroke-width="1.400"/></svg></div>
<div class="tb" style="left:1632.5px;top:180.5px;width:45px;height:20.5px;"><div style="left:3px;top:1px;width:16px;height:16px"><svg width="16" height="16"><path d="M2 5 L8 2 L14 5 V12 L8 15 L2 12z" fill="#e8c040" stroke="#644"/><path d="M5 4v8M8 3v10M11 4v8" stroke="#c02020" stroke-width="1.500"/><path d="M2 5 L8 8 L14 5" fill="none" stroke="#644"/></svg></div><svg class="s" style="left:24px;top:1.5px" width="17" height="16"><text x="0" y="12.32" font-size="12" fill="#000" textLength="17" lengthAdjust="spacingAndGlyphs">フ...</text></svg></div>
<div class="tb" style="left:1632.5px;top:205.5px;width:45px;height:20.5px;"><div style="left:3px;top:1px;width:16px;height:16px"><svg width="16" height="16"><circle cx="8" cy="8" r="7.300" fill="#e8761c"/><circle cx="8.800" cy="6.800" r="4.600" fill="#2f6cc4"/><path d="M6.500 3.500 q3-1.500 5 1 q-2-0.500-3 1z" fill="#58a0e0"/><path d="M1.200 6 q1.500 4.500 6.300 4 q3-0.500 4.500-3 q2 4-1.500 7 q-4 2.500-8-1 q-2.500-3-1.300-7z" fill="#f0982a"/><path d="M2 11 q3 4.500 8 3" stroke="#c8401c" stroke-width="1.200" fill="none"/></svg></div><svg class="s" style="left:24px;top:1.5px" width="17" height="16"><text x="0" y="12.32" font-size="12" fill="#000" textLength="17" lengthAdjust="spacingAndGlyphs">株...</text></svg></div>
<div class="tb" style="left:1632.5px;top:230.5px;width:45px;height:20.5px;background:#e4e4e4;background-image:repeating-conic-gradient(#fff 0 25%,#c0c0c0 0 50%);background-size:2px 2px;border-color:#404040 #fff #fff #404040;box-shadow:inset 1px 1px 0 #808080;"><div style="left:3px;top:1px;width:16px;height:16px"><svg width="15" height="15" viewBox="0 0 15 15"><rect x="0.800" y="3.800" width="10.500" height="10.400" fill="#fce9da" stroke="#f2c39c" stroke-width="0.900"/><path d="M3.300 7 L5.200 11.300 L9.300 6" fill="none" stroke="#dc7a1e" stroke-width="2" stroke-linejoin="round"/><path d="M9 6.500 L14 0.500" fill="none" stroke="#c89070" stroke-width="1.100"/></svg></div><svg class="s" style="left:24px;top:1.5px" width="17" height="16"><text x="0" y="12.32" font-size="12" fill="#000" font-weight="bold" textLength="17" lengthAdjust="spacingAndGlyphs">ジ...</text></svg></div>
<div style="left:1632.5px;top:916.5px;width:45px;height:131.5px;background:#c0c0c0;border:1px solid;border-color:#808080 #fff #fff #808080"></div>
<div style="left:1638.7px;top:919px;width:16px;height:16px;"><svg width="16" height="16" viewBox="0 0 14 14"><circle cx="6.500" cy="6.500" r="5.800" fill="#f4c820" stroke="#a07010" stroke-width="0.800"/><path d="M3 6.500h5M6 3v4" stroke="#604008" stroke-width="1"/><circle cx="10" cy="10" r="3.800" fill="#22aa22" stroke="#0a500a" stroke-width="0.800"/><path d="M8 10l1.500 1.500 2.300-3" stroke="#fff" fill="none" stroke-width="1.300"/></svg></div>
<div style="left:1656.4px;top:919px;width:16px;height:16px;"><svg width="16" height="16" viewBox="0 0 14 14"><rect x="5.500" y="0.800" width="8" height="7" fill="#283878" stroke="#101840"/><rect x="6.800" y="2" width="5.500" height="4" fill="#5878c8"/><rect x="0.800" y="5" width="8" height="7" fill="#384890" stroke="#101840"/><rect x="2" y="6.200" width="5.500" height="4" fill="#a8c0f0"/><path d="M3 13.200h4" stroke="#101840" stroke-width="1.200"/></svg></div>
<div style="left:1638.7px;top:936.5px;width:16px;height:16px;"><svg width="16" height="16" viewBox="0 0 14 14"><path d="M1 6 L7 2 L13 6 V10.500 L7 13.500 L1 10.500z" fill="#f0d040" stroke="#201008" stroke-width="1"/><path d="M3.500 4.500v7M6.500 3v9.500M9.500 4v8" stroke="#c82020" stroke-width="1.400"/><path d="M1 8.500 L7 11.500 L13 8.500" fill="none" stroke="#201008" stroke-width="0.900"/><path d="M4 1.500 l2 1.500" stroke="#f0d040" stroke-width="1.500"/></svg></div>
<div style="left:1656.4px;top:936.5px;width:16px;height:16px;"><svg width="16" height="16" viewBox="0 0 14 14"><path d="M6 0.800 q-6.500 6.200 0 12.400" stroke="#0a7a70" stroke-width="3" fill="none"/><path d="M6.500 3 q-3 4 0 8" stroke="#103850" stroke-width="1" fill="none"/><ellipse cx="10.500" cy="2.500" rx="1.800" ry="1.300" fill="#e02058"/><circle cx="12" cy="7" r="1.400" fill="#2050d8"/><circle cx="10" cy="11.300" r="1.500" fill="#1840b0"/><circle cx="9" cy="6.800" r="1" fill="#2868e0"/></svg></div>
<div style="left:1638.7px;top:955.5px;width:16px;height:16px;"><svg width="16" height="16" viewBox="0 0 14 14"><path d="M1 8 L8.500 2.500 L13 5.500 L13 10.500 L4.500 13.300 L1 11z" fill="#f4e418" stroke="#181808" stroke-width="1.100"/><path d="M1.500 2.500 l3.500 3 M1 4.500h2.500" stroke="#181808" stroke-width="1.200"/><path d="M3.500 10 L11 7" stroke="#181808" stroke-width="0.900"/><rect x="10.500" y="9.500" width="2.500" height="2.500" fill="#fff" stroke="#181808" stroke-width="0.700"/></svg></div>
<div style="left:1656.4px;top:955.5px;width:16px;height:16px;"><svg width="16" height="16" viewBox="0 0 14 14"><path d="M1 1h3l3 3 3-3h3v12H1z" fill="#c02818"/><rect x="0.500" y="1" width="2.500" height="12" fill="#48b030"/><rect x="3.500" y="4.500" width="9" height="8" fill="#f4e418"/><path d="M6 7v1.500M10 7v1.500M5.500 10.300q2.500 1.800 5 0" stroke="#281808" fill="none" stroke-width="1"/><rect x="0.500" y="10.500" width="3" height="3" fill="#f4f4f4"/></svg></div>
<div style="left:1638.7px;top:973px;width:16px;height:16px;"><svg width="16" height="16" viewBox="0 0 14 14"><rect x="0.300" y="0.300" width="13" height="12.500" fill="#d4d4d4"/><path d="M0.300 12.800V0.300H13.300" fill="none" stroke="#808080"/><path d="M0.300 12.800H13.300V0.300" fill="none" stroke="#fff"/><circle cx="9.500" cy="7.500" r="2.600" fill="#e8f0ec" stroke="#707070" stroke-width="0.800"/><rect x="8.500" y="10" width="2" height="3" fill="#704050"/></svg></div>
<div style="left:1656.4px;top:973px;width:16px;height:16px;"><svg width="16" height="16" viewBox="0 0 14 14"><circle cx="7" cy="7" r="6.600" fill="#2c7858" stroke="#104030" stroke-width="0.800"/><path d="M3.300 11.500 Q6 8 11 2.500 Q10 8 5.500 10.500z" fill="#fff"/></svg></div>
<div style="left:1638.7px;top:990.5px;width:16px;height:16px;"><svg width="16" height="16" viewBox="0 0 14 14"><path d="M2 1.500 l2 1 2-1.500 0.500 2 2-0.500 L8 6 H2.500z" fill="#38a028"/><path d="M2 8.500 L9.500 6 L13 9.500 L6 13.300 L2.500 12z" fill="#8090a8" stroke="#303840" stroke-width="0.900"/><rect x="5" y="8" width="4" height="2.500" fill="#303848" transform="rotate(-18 7 9)"/></svg></div>
<div style="left:1656.4px;top:990.5px;width:16px;height:16px;"><svg width="16" height="16" viewBox="0 0 14 14"><path d="M0.500 7 q3.500-4.500 7.500 0 q-4 4.500-7.500 0z M2.500 7 q2-2.500 4 0 q-2 2.500-4 0z" fill="#181818" fill-rule="evenodd"/><rect x="6" y="2" width="7.500" height="10" fill="#b0cc30" stroke="#607010" stroke-width="0.600"/><path d="M6 4 q3 1 3 3 q0 2-3 3" fill="none" stroke="#181818" stroke-width="0.900"/></svg></div>
<div style="left:1638.7px;top:1009px;width:16px;height:16px;"><svg width="16" height="16" viewBox="0 0 14 14"><rect x="0" y="0" width="14" height="14" fill="#101888"/><circle cx="7" cy="7" r="2" fill="#f4e820"/><path d="M4 3 q-3 4 0 8 M10 3 q3 4 0 8" stroke="#f4f0a0" fill="none" stroke-width="1.200"/><path d="M2 1.500 q-3.500 5.500 0 11 M12 1.500 q3.500 5.500 0 11" stroke="#e8e8c0" fill="none" stroke-width="0.900"/></svg></div>
<svg class="s" style="left:1642.5px;top:1028px" width="25" height="16"><text x="0" y="12.32" font-size="12" fill="#000" textLength="25" lengthAdjust="spacingAndGlyphs">10:44</text></svg>
</body></html>
